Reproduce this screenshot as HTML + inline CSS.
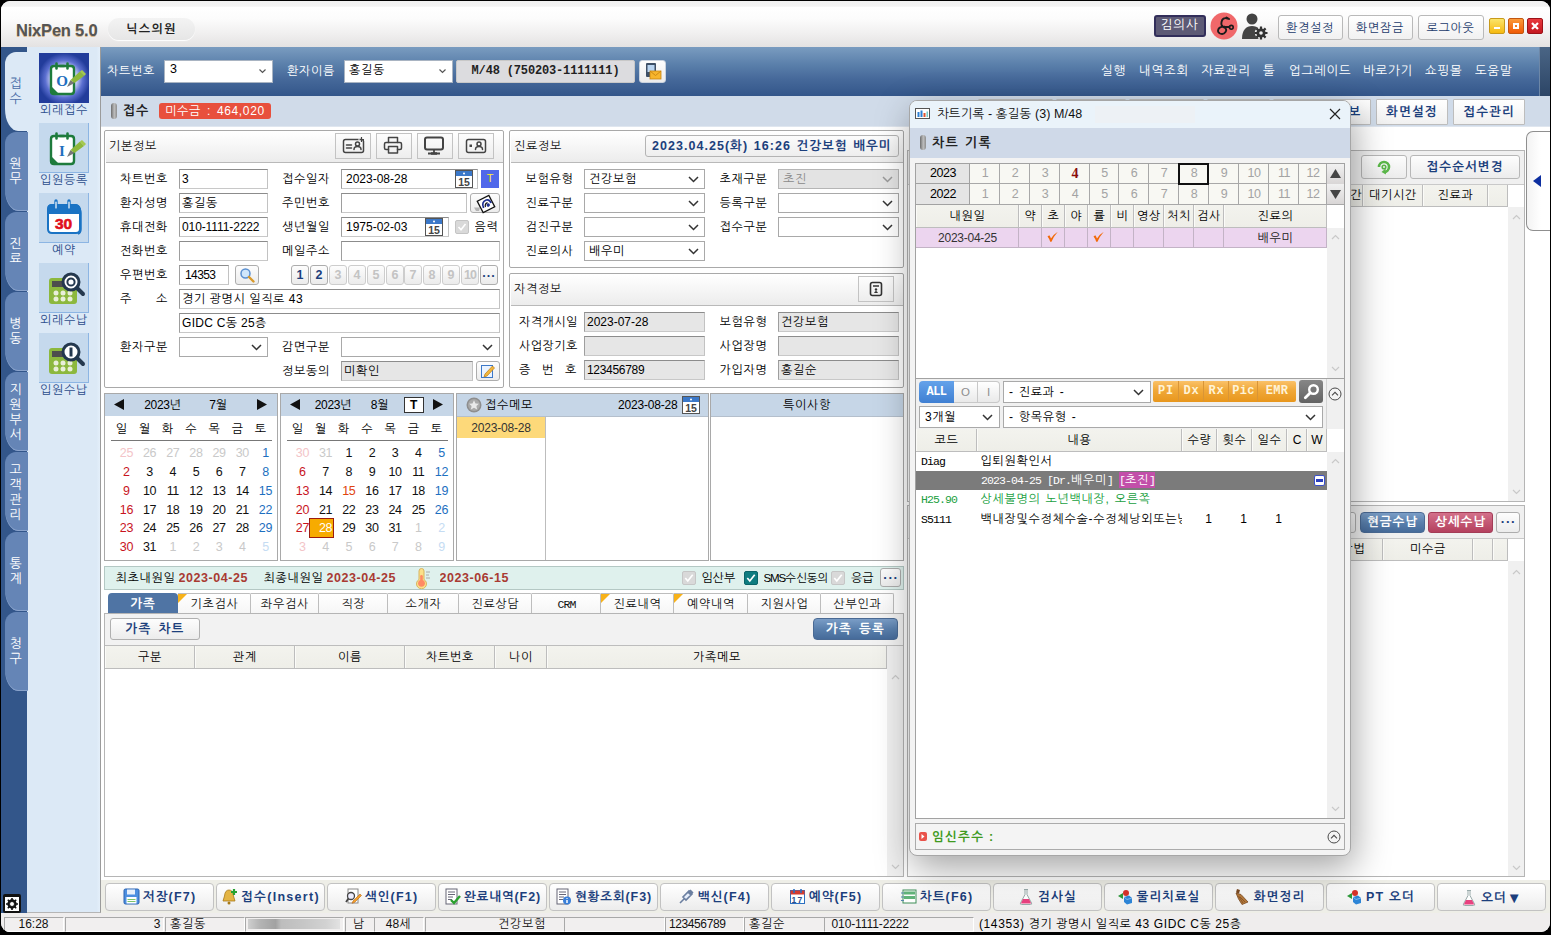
<!DOCTYPE html>
<html lang="ko"><head><meta charset="utf-8"><title>NixPen 5.0</title>
<style>
*{box-sizing:border-box}
html,body{margin:0;padding:0}
body{width:1551px;height:935px;background:#000;overflow:hidden;position:relative;font-family:"Liberation Sans","NanumGothic",sans-serif;font-size:12px;color:#000}
div,svg{position:absolute}
.t{white-space:nowrap;overflow:hidden}
.k{letter-spacing:.72px}
.kb{letter-spacing:1.25px}
.c{text-align:center}
.r{text-align:right}
.b{font-weight:bold}
.w{color:#fff}
.nv{color:#1c3f7c}
.in{background:#fff;border:1px solid #8c8c8c;border-left-color:#9e9e9e;border-right-color:#c2c2c2;border-bottom-color:#c8c8c8;padding-left:2px;white-space:nowrap;overflow:hidden}
.ro{background:#e6e6e6}
.sel{background:#fff;border:1px solid #a9a9a9;padding-left:4px;white-space:nowrap;overflow:hidden}
.btn{background:linear-gradient(#fdfdfd,#ececec);border:1px solid #b4b4b4;border-radius:3px;text-align:center;white-space:nowrap;overflow:hidden}
.pn{background:#fff;border:1px solid #a9a9a9;border-radius:2px}
.ph{background:linear-gradient(#ffffff,#ececec);border-bottom:1px solid #b9b9b9}
.gh{background:linear-gradient(#f3f3ee,#eeeee8);border-right:1px solid #bdbdbd;border-bottom:1px solid #bdbdbd;box-shadow:inset 1px 0 0 #fbfbf8}
.sb{background:#f0f0f0}
</style></head>
<body>
<div style="left:1px;top:1px;width:1549px;height:931px;background:#f0f0f0;border-radius:9px 9px 9px 9px;overflow:hidden">
<div style="left:-1px;top:-1px;width:1551px;height:935px">
<div style="left:0px;top:0px;width:1551px;height:47px;background:linear-gradient(#f1f1f1 0%,#f3f3f3 13%,#ffffff 16%,#fcfcfc 40%,#f0efef 72%,#e4e2e2 100%);"></div>
<div class="t b" style="left:16px;top:18.5px;width:90px;height:22px;line-height:22px;font-size:16.5px;color:#555;text-shadow:0 1px 0 #d9b68a;font-family:'Liberation Sans',sans-serif;letter-spacing:-.2px">NixPen 5.0</div>
<div style="left:108px;top:18px;width:87px;height:22px;background:linear-gradient(#f3f3f3,#e6e6e6);border-radius:11px;box-shadow:0 1px 1px #fff"></div>
<div class="t c b" style="left:108px;top:18px;width:87px;height:22px;line-height:22px;letter-spacing:1.5px;color:#222;font-size:12px">닉스의원</div>
<div style="left:1154px;top:15px;width:52px;height:22px;background:#5d5a75;border:2px solid #322e5a;border-radius:3px"></div>
<div class="t c w k" style="left:1154px;top:15px;width:51px;height:21px;line-height:21px;font-size:12.5px">김의사</div>
<svg style="left:1210px;top:12px" width="28" height="28" viewBox="0 0 28 28"><circle cx="14" cy="14" r="13.5" fill="#f0686a"/><path d="M17.500 6.500q-5-1.500-6 3.500-.8 4 2.500 5.500 3.500 1.500 1.500 4.500-2 3-5.500 1.500-3-1.500-1.500-4.500 1.500-2.800 6.500-2.300l4.500.3" fill="none" stroke="#1b1b1b" stroke-width="1.900" stroke-linecap="round"/><circle cx="21.300" cy="15.300" r="1.900" fill="none" stroke="#1b1b1b" stroke-width="1.600"/><path d="M16.500 5.500l2.500 1.500" stroke="#1b1b1b" stroke-width="2" stroke-linecap="round"/></svg>
<svg style="left:1241px;top:12px" width="28" height="28" viewBox="0 0 28 28"><circle cx="11" cy="7" r="5.5" fill="#444"/><path d="M1 27c0-9 4-13 10-13s10 4 10 13z" fill="#444"/><circle cx="20" cy="21" r="6.2" fill="#efefef"/><circle cx="20" cy="21" r="4.6" fill="#333"/><circle cx="20" cy="21" r="1.8" fill="#efefef"/><path d="M20 14.5v13M13.5 21h13M15.4 16.4l9.2 9.2M24.6 16.4l-9.2 9.2" stroke="#333" stroke-width="2.2"/><circle cx="20" cy="21" r="1.8" fill="#efefef"/></svg>
<div class="btn" style="left:1278px;top:15px;width:65px;height:25px;border-color:#b9b9b9;border-radius:3px;background:linear-gradient(#ffffff,#f1f1f1)"></div>
<div class="t c k" style="left:1278px;top:15.5px;width:64px;height:24px;line-height:24px;color:#223a6b;font-size:12px">환경설정</div>
<div class="btn" style="left:1348px;top:15px;width:65px;height:25px;border-color:#b9b9b9;border-radius:3px;background:linear-gradient(#ffffff,#f1f1f1)"></div>
<div class="t c k" style="left:1348px;top:15.5px;width:64px;height:24px;line-height:24px;color:#223a6b;font-size:12px">화면잠금</div>
<div class="btn" style="left:1418px;top:15px;width:66px;height:25px;border-color:#b9b9b9;border-radius:3px;background:linear-gradient(#ffffff,#f1f1f1)"></div>
<div class="t c k" style="left:1418px;top:15.5px;width:65px;height:24px;line-height:24px;color:#223a6b;font-size:12px">로그아웃</div>
<div style="left:1489px;top:18px;width:16px;height:16px;background:linear-gradient(#fbe56a,#f6b90f);border:1px solid #c89a1a;border-radius:2px"></div>
<div style="left:1494px;top:27px;width:6px;height:2px;background:#fff"></div>
<div style="left:1508px;top:18px;width:16px;height:16px;background:linear-gradient(#fb9a3a,#f05a05);border:1px solid #c2560f;border-radius:2px"></div>
<div style="left:1513px;top:23px;width:6px;height:6px;border:2px solid #fff"></div>
<div style="left:1527px;top:18px;width:16px;height:16px;background:linear-gradient(#e8393d,#c41820);border:1px solid #9c1218;border-radius:2px"></div>
<svg style="left:1531px;top:22px" width="8" height="8" viewBox="0 0 8 8"><path d="M1 1l6 6M7 1L1 7" stroke="#fff" stroke-width="2.200"/></svg>
<div style="left:0px;top:47px;width:28px;height:866px;background:#33568a"></div>
<div style="left:27px;top:47px;width:74px;height:866px;background:linear-gradient(90deg,#dce9f6 95%,#e4effa);border-right:1px solid #9b9b9b;border-bottom:1px solid #b5b5b5"></div>
<div style="left:5px;top:52px;width:24px;height:79px;background:#dce9f6;border-radius:11px 0 0 13px/12px 0 0 22px;"></div>
<div class="t c" style="left:4.5px;top:77.2px;width:23px;height:14.8px;line-height:14.8px;color:#4a6da8;font-size:13px"><span class="k">접</span></div>
<div class="t c" style="left:4.5px;top:92px;width:23px;height:14.8px;line-height:14.8px;color:#4a6da8;font-size:13px"><span class="k">수</span></div>
<div style="left:5px;top:132px;width:23px;height:79px;background:#6585b6;border-radius:11px 0 0 13px/12px 0 0 22px;box-shadow:inset 0 -1px 0 #8aa3cb"></div>
<div class="t c" style="left:4.5px;top:157.2px;width:23px;height:14.8px;line-height:14.8px;color:#ffffff;font-size:13px"><span class="k">원</span></div>
<div class="t c" style="left:4.5px;top:172px;width:23px;height:14.8px;line-height:14.8px;color:#ffffff;font-size:13px"><span class="k">무</span></div>
<div style="left:5px;top:212px;width:23px;height:79px;background:#6585b6;border-radius:11px 0 0 13px/12px 0 0 22px;box-shadow:inset 0 -1px 0 #8aa3cb"></div>
<div class="t c" style="left:4.5px;top:237.2px;width:23px;height:14.8px;line-height:14.8px;color:#ffffff;font-size:13px"><span class="k">진</span></div>
<div class="t c" style="left:4.5px;top:252px;width:23px;height:14.8px;line-height:14.8px;color:#ffffff;font-size:13px"><span class="k">료</span></div>
<div style="left:5px;top:292px;width:23px;height:79px;background:#6585b6;border-radius:11px 0 0 13px/12px 0 0 22px;box-shadow:inset 0 -1px 0 #8aa3cb"></div>
<div class="t c" style="left:4.5px;top:317.2px;width:23px;height:14.8px;line-height:14.8px;color:#ffffff;font-size:13px"><span class="k">병</span></div>
<div class="t c" style="left:4.5px;top:332px;width:23px;height:14.8px;line-height:14.8px;color:#ffffff;font-size:13px"><span class="k">동</span></div>
<div style="left:5px;top:372px;width:23px;height:79px;background:#6585b6;border-radius:11px 0 0 13px/12px 0 0 22px;box-shadow:inset 0 -1px 0 #8aa3cb"></div>
<div class="t c" style="left:4.5px;top:381.6px;width:23px;height:15.2px;line-height:15.2px;color:#ffffff;font-size:13px"><span class="k">지</span></div>
<div class="t c" style="left:4.5px;top:396.8px;width:23px;height:15.2px;line-height:15.2px;color:#ffffff;font-size:13px"><span class="k">원</span></div>
<div class="t c" style="left:4.5px;top:412px;width:23px;height:15.2px;line-height:15.2px;color:#ffffff;font-size:13px"><span class="k">부</span></div>
<div class="t c" style="left:4.5px;top:427.2px;width:23px;height:15.2px;line-height:15.2px;color:#ffffff;font-size:13px"><span class="k">서</span></div>
<div style="left:5px;top:452px;width:23px;height:79px;background:#6585b6;border-radius:11px 0 0 13px/12px 0 0 22px;box-shadow:inset 0 -1px 0 #8aa3cb"></div>
<div class="t c" style="left:4.5px;top:461.6px;width:23px;height:15.2px;line-height:15.2px;color:#ffffff;font-size:13px"><span class="k">고</span></div>
<div class="t c" style="left:4.5px;top:476.8px;width:23px;height:15.2px;line-height:15.2px;color:#ffffff;font-size:13px"><span class="k">객</span></div>
<div class="t c" style="left:4.5px;top:492px;width:23px;height:15.2px;line-height:15.2px;color:#ffffff;font-size:13px"><span class="k">관</span></div>
<div class="t c" style="left:4.5px;top:507.2px;width:23px;height:15.2px;line-height:15.2px;color:#ffffff;font-size:13px"><span class="k">리</span></div>
<div style="left:5px;top:532px;width:23px;height:79px;background:#6585b6;border-radius:11px 0 0 13px/12px 0 0 22px;box-shadow:inset 0 -1px 0 #8aa3cb"></div>
<div class="t c" style="left:4.5px;top:557.2px;width:23px;height:14.8px;line-height:14.8px;color:#ffffff;font-size:13px"><span class="k">통</span></div>
<div class="t c" style="left:4.5px;top:572px;width:23px;height:14.8px;line-height:14.8px;color:#ffffff;font-size:13px"><span class="k">계</span></div>
<div style="left:5px;top:612px;width:23px;height:79px;background:#6585b6;border-radius:11px 0 0 13px/12px 0 0 22px;box-shadow:inset 0 -1px 0 #8aa3cb"></div>
<div class="t c" style="left:4.5px;top:637.2px;width:23px;height:14.8px;line-height:14.8px;color:#ffffff;font-size:13px"><span class="k">청</span></div>
<div class="t c" style="left:4.5px;top:652px;width:23px;height:14.8px;line-height:14.8px;color:#ffffff;font-size:13px"><span class="k">구</span></div>
<div style="left:3px;top:894px;width:18px;height:19px;background:#111;border-radius:2px"></div>
<svg style="left:5px;top:897px" width="14" height="14" viewBox="0 0 14 14"><rect x="0" y="0" width="14" height="14" fill="#fff"/><circle cx="7" cy="7" r="3.6" fill="none" stroke="#111" stroke-width="2.2"/><path d="M7 1v12M1 7h12M2.8 2.8l8.4 8.4M11.2 2.8l-8.4 8.4" stroke="#111" stroke-width="1.6"/><circle cx="7" cy="7" r="2" fill="#fff"/></svg>
<div style="left:39px;top:53px;width:50px;height:50px;background:radial-gradient(circle at 50% 52%,#ffffff 0%,#e8ecff 30%,#5b6fd0 52%,#223c9b 72%);overflow:hidden"><svg style="left:0;top:0" width="50" height="50" viewBox="0 -3 50 50"><path d="M12 13q0-3 3-3h17q3 0 3 3v22q0 3-3 3H15q-3 0-3-3z" fill="#fff" stroke="#1e7b3c" stroke-width="2.4"/><path d="M11 29l9 9h-6q-3 0-3-3z" fill="#1e7b3c"/><path d="M13.5 30.5h5.5v5.5z" fill="#fff" opacity=".9"/><path d="M17.5 7.5v5M28.500 7.500v5" stroke="#1e7b3c" stroke-width="2.6" stroke-linecap="round"/><path d="M20.500 10h5" stroke="#1e7b3c" stroke-width="2.400"/><text x="23" y="30" font-family="Liberation Serif,serif" font-weight="bold" font-size="15" fill="#1f6fc0" text-anchor="middle">O</text><path d="M28 31l3.5-7 4 3z" fill="#777"/><path d="M31.5 24l9.500-8.500 4 4.500-9.500 7z" fill="#8fb83a"/><path d="M41 15.500l2-1.500 4 4-2 2z" fill="#a5c94e"/></svg></div>
<div class="t c k" style="left:30px;top:103px;width:68px;height:14px;line-height:14px;color:#2b4d8c;font-size:12px">외래접수</div>
<div style="left:39px;top:123px;width:50px;height:50px;background:#c5d9ed;border-right:1px solid #8cb5e3;border-bottom:1px solid #8cb5e3;overflow:hidden"><svg style="left:0;top:0" width="50" height="50" viewBox="0 -3 50 50"><path d="M12 13q0-3 3-3h17q3 0 3 3v22q0 3-3 3H15q-3 0-3-3z" fill="#fff" stroke="#1e7b3c" stroke-width="2.4"/><path d="M11 29l9 9h-6q-3 0-3-3z" fill="#1e7b3c"/><path d="M13.5 30.5h5.5v5.5z" fill="#fff" opacity=".9"/><path d="M17.5 7.5v5M28.500 7.500v5" stroke="#1e7b3c" stroke-width="2.6" stroke-linecap="round"/><path d="M20.500 10h5" stroke="#1e7b3c" stroke-width="2.400"/><text x="23" y="30" font-family="Liberation Serif,serif" font-weight="bold" font-size="15" fill="#1f6fc0" text-anchor="middle">I</text><path d="M28 31l3.5-7 4 3z" fill="#777"/><path d="M31.5 24l9.500-8.500 4 4.500-9.500 7z" fill="#8fb83a"/><path d="M41 15.500l2-1.500 4 4-2 2z" fill="#a5c94e"/></svg></div>
<div class="t c k" style="left:30px;top:173px;width:68px;height:14px;line-height:14px;color:#2b4d8c;font-size:12px">입원등록</div>
<div style="left:39px;top:193px;width:50px;height:50px;background:#c5d9ed;border-right:1px solid #8cb5e3;border-bottom:1px solid #8cb5e3;overflow:hidden"><svg style="left:0;top:0" width="50" height="50" viewBox="0 0 50 50"><path d="M9 16q0-4 4-4h23q4 0 5 4v20q0 4-4 4H13q-4 0-4-4z" fill="#fff" stroke="#1a73c4" stroke-width="2"/><path d="M8.500 21v-5q0-5 5-5h22q5 0 6 5v5z" fill="#1a73c4"/><path d="M39 14q3 2 3 6v16q0 4-3 5" fill="none" stroke="#1a73c4" stroke-width="1.500"/><path d="M17 8v8M30 8v8" stroke="#1a73c4" stroke-width="3.400" stroke-linecap="round"/><path d="M17 9v6M30 9v6" stroke="#fff" stroke-width="1.200" stroke-linecap="round"/><text x="24.500" y="35.500" font-family="Liberation Sans,sans-serif" font-weight="bold" font-size="15.500" fill="#e0101c" stroke="#e0101c" stroke-width=".6" text-anchor="middle">30</text></svg></div>
<div class="t c k" style="left:30px;top:243px;width:68px;height:14px;line-height:14px;color:#2b4d8c;font-size:12px">예약</div>
<div style="left:39px;top:263px;width:50px;height:50px;background:#c5d9ed;border-right:1px solid #8cb5e3;border-bottom:1px solid #8cb5e3;overflow:hidden"><svg style="left:0;top:0" width="50" height="50" viewBox="0 0 50 50"><rect x="10" y="15" width="28" height="26" rx="3" fill="#8cb83e"/><rect x="13" y="18" width="14" height="6" fill="#4d4d4d"/><circle cx="17" cy="30" r="2.5" fill="#e9efd9"/><circle cx="17" cy="36" r="2.5" fill="#e9efd9"/><circle cx="24" cy="30" r="2.5" fill="#e9efd9"/><circle cx="24" cy="36" r="2.5" fill="#e9efd9"/><circle cx="31" cy="30" r="2.5" fill="#e9efd9"/><circle cx="31" cy="36" r="2.5" fill="#e9efd9"/><circle cx="32" cy="19" r="8" fill="#fff" stroke="#24384e" stroke-width="3"/><path d="M38 25l6 6" stroke="#24384e" stroke-width="4" stroke-linecap="round"/><circle cx="32" cy="19" r="3.600" fill="none" stroke="#24384e" stroke-width="2"/></svg></div>
<div class="t c k" style="left:30px;top:313px;width:68px;height:14px;line-height:14px;color:#2b4d8c;font-size:12px">외래수납</div>
<div style="left:39px;top:333px;width:50px;height:50px;background:#c5d9ed;border-right:1px solid #8cb5e3;border-bottom:1px solid #8cb5e3;overflow:hidden"><svg style="left:0;top:0" width="50" height="50" viewBox="0 0 50 50"><rect x="10" y="15" width="28" height="26" rx="3" fill="#8cb83e"/><rect x="13" y="18" width="14" height="6" fill="#4d4d4d"/><circle cx="17" cy="30" r="2.5" fill="#e9efd9"/><circle cx="17" cy="36" r="2.5" fill="#e9efd9"/><circle cx="24" cy="30" r="2.5" fill="#e9efd9"/><circle cx="24" cy="36" r="2.5" fill="#e9efd9"/><circle cx="31" cy="30" r="2.5" fill="#e9efd9"/><circle cx="31" cy="36" r="2.5" fill="#e9efd9"/><circle cx="32" cy="19" r="8" fill="#fff" stroke="#24384e" stroke-width="3"/><path d="M38 25l6 6" stroke="#24384e" stroke-width="4" stroke-linecap="round"/><path d="M32 14.500v9" stroke="#24384e" stroke-width="3"/></svg></div>
<div class="t c k" style="left:30px;top:383px;width:68px;height:14px;line-height:14px;color:#2b4d8c;font-size:12px">입원수납</div>
<div style="left:101px;top:47px;width:1438px;height:49px;background:linear-gradient(#7a9cc0 0%,#5b80ab 35%,#46699a 65%,#33568a 100%)"></div>
<div style="left:1539px;top:47px;width:12px;height:49px;background:linear-gradient(#4a6585,#2c4566);border-left:1px solid #6d87a7"></div>
<div class="t w k" style="left:107px;top:62px;width:50px;height:18px;line-height:18px;font-size:12px">차트번호</div>
<div class="sel" style="left:164px;top:60px;width:109px;height:23px;border-color:#a9b4c2;padding-left:5px;line-height:17px;font-size:12.5px">3</div>
<svg style="left:258px;top:68px" width="9" height="6" viewBox="0 0 9 6"><path d="M1.500 1.500l3 3 3-3" fill="none" stroke="#555" stroke-width="1.200"/></svg>
<div class="t w k" style="left:287px;top:62px;width:50px;height:18px;line-height:18px;font-size:12px">환자이름</div>
<div class="sel" style="left:344px;top:60px;width:109px;height:23px;border-color:#a9b4c2;padding-left:4px;line-height:18px;font-size:12px;letter-spacing:.7px">홍길동</div>
<svg style="left:438px;top:68px" width="9" height="6" viewBox="0 0 9 6"><path d="M1.500 1.500l3 3 3-3" fill="none" stroke="#555" stroke-width="1.200"/></svg>
<div style="left:456px;top:60px;width:179px;height:23px;background:#dcdcdf;border:1px solid #c8c8c8;border-radius:2px"></div>
<div class="t c b" style="left:456px;top:60px;width:179px;height:23px;line-height:23px;font-family:'Liberation Mono',monospace;font-size:12px;color:#222;letter-spacing:-.16px">M/48 (750203-1111111)</div>
<div class="btn" style="left:639px;top:60px;width:27px;height:23px;border-color:#c9d2de;border-radius:3px"></div>
<svg style="left:643px;top:62px" width="19" height="19" viewBox="0 0 19 19"><rect x="3" y="1" width="10" height="14" rx="1" fill="#3d4f66"/><rect x="4.500" y="3" width="7" height="7" fill="#b9d4f0"/><rect x="7" y="9" width="11" height="8" fill="#f7b52c" stroke="#c98512" stroke-width=".8"/><path d="M7 9l5.500 4.500L18 9" fill="none" stroke="#c98512" stroke-width=".9"/></svg>
<div class="t w k" style="left:1101px;top:62px;width:30px;height:18px;line-height:18px;font-size:12.5px">실행</div>
<div class="t w k" style="left:1139px;top:62px;width:54px;height:18px;line-height:18px;font-size:12.5px">내역조회</div>
<div class="t w k" style="left:1201px;top:62px;width:54px;height:18px;line-height:18px;font-size:12.5px">자료관리</div>
<div class="t w k" style="left:1263px;top:62px;width:18px;height:18px;line-height:18px;font-size:12.5px">툴</div>
<div class="t w k" style="left:1289px;top:62px;width:66px;height:18px;line-height:18px;font-size:12.5px">업그레이드</div>
<div class="t w k" style="left:1363px;top:62px;width:54px;height:18px;line-height:18px;font-size:12.5px">바로가기</div>
<div class="t w k" style="left:1425px;top:62px;width:42px;height:18px;line-height:18px;font-size:12.5px">쇼핑몰</div>
<div class="t w k" style="left:1475px;top:62px;width:42px;height:18px;line-height:18px;font-size:12.5px">도움말</div>
<div style="left:101px;top:96px;width:1450px;height:31px;background:#d0dbe9;border-bottom:1px solid #dfe6ef"></div>
<div style="left:101px;top:127px;width:1450px;height:753px;background:#fff"></div>
<div style="left:111px;top:103px;width:6px;height:16px;background:linear-gradient(90deg,#6d6d6d,#bdbdbd 55%,#8e8e8e);border-radius:3px"></div>
<div class="t b k" style="left:123px;top:102px;width:30px;height:18px;line-height:18px;font-size:13px;color:#222">접수</div>
<div style="left:159px;top:103px;width:112px;height:16px;background:#e8503d;border-radius:3px"></div>
<div class="t c w" style="left:159px;top:103px;width:112px;height:16px;line-height:16px;font-size:12px;letter-spacing:.65px;word-spacing:2px">미수금 : 464,020</div>
<div class="pn" style="left:104px;top:130px;width:400px;height:258px;"></div>
<div class="ph" style="left:106px;top:132px;width:397px;height:31px;"></div>
<div class="t k" style="left:109px;top:137px;width:60px;height:18px;line-height:18px;color:#111">기본정보</div>
<div style="left:335px;top:133px;width:36px;height:26px;background:linear-gradient(#fdfdfd,#ededed);border:1px solid #c3c3c3"></div>
<svg style="left:335px;top:133px" width="36" height="26" viewBox="0 0 36 26"><rect x="8.500" y="6.500" width="20" height="13" rx="2" fill="none" stroke="#444" stroke-width="1.5" stroke-linejoin="round" stroke-linecap="round"/><path d="M11.500 12h5M11.500 15h5" fill="none" stroke="#444" stroke-width="1.5" stroke-linejoin="round" stroke-linecap="round"/><circle cx="22.500" cy="11" r="2" fill="none" stroke="#444" stroke-width="1.5" stroke-linejoin="round" stroke-linecap="round"/><path d="M19 16.500q0-3 3.500-3t3.500 3" fill="none" stroke="#444" stroke-width="1.5" stroke-linejoin="round" stroke-linecap="round"/><path d="M26.500 4v5M24 6.500h5" stroke="#444" stroke-width="1.200"/><path d="M23.500 6.500h1M29 6.500h1" stroke="#f7f7f7" stroke-width="2.500"/></svg>
<div style="left:376px;top:133px;width:36px;height:26px;background:linear-gradient(#fdfdfd,#ededed);border:1px solid #c3c3c3"></div>
<svg style="left:376px;top:133px" width="36" height="26" viewBox="0 0 36 26"><path d="M12.500 9.500v-5h9v5" fill="none" stroke="#444" stroke-width="1.5" stroke-linejoin="round" stroke-linecap="round"/><path d="M12.500 16.500h-2.500q-1.500 0-1.500-1.500v-4q0-1.500 1.500-1.500h14q1.500 0 1.500 1.500v4q0 1.500-1.500 1.500h-2.500" fill="none" stroke="#444" stroke-width="1.5" stroke-linejoin="round" stroke-linecap="round"/><rect x="12.500" y="13.500" width="9" height="6.500" fill="none" stroke="#444" stroke-width="1.5" stroke-linejoin="round" stroke-linecap="round"/></svg>
<div style="left:417px;top:133px;width:36px;height:26px;background:linear-gradient(#fdfdfd,#ededed);border:1px solid #c3c3c3"></div>
<svg style="left:417px;top:133px" width="36" height="26" viewBox="0 0 36 26"><rect x="8" y="4.500" width="18" height="12" rx="2" fill="none" stroke="#444" stroke-width="2"/><path d="M17 17v3M11 20.500h12" stroke="#444" stroke-width="1.800"/><path d="M14 20.500h6" stroke="#444" stroke-width="2.400"/></svg>
<div style="left:458px;top:133px;width:36px;height:26px;background:linear-gradient(#fdfdfd,#ededed);border:1px solid #c3c3c3"></div>
<svg style="left:458px;top:133px" width="36" height="26" viewBox="0 0 36 26"><rect x="8.500" y="6.500" width="19" height="13" rx="2" fill="none" stroke="#444" stroke-width="1.5" stroke-linejoin="round" stroke-linecap="round"/><rect x="11.500" y="11.500" width="2.500" height="2.500" fill="#444"/><circle cx="21" cy="11" r="2" fill="none" stroke="#444" stroke-width="1.5" stroke-linejoin="round" stroke-linecap="round"/><path d="M17.500 16.500q0-3 3.500-3t3.500 3" fill="none" stroke="#444" stroke-width="1.5" stroke-linejoin="round" stroke-linecap="round"/></svg>
<div class="t k" style="left:120px;top:169.5px;width:50px;height:19px;line-height:19px;">차트번호</div>
<div class="t k" style="left:120px;top:193.5px;width:50px;height:19px;line-height:19px;">환자성명</div>
<div class="t k" style="left:120px;top:217.5px;width:50px;height:19px;line-height:19px;">휴대전화</div>
<div class="t k" style="left:120px;top:241.5px;width:50px;height:19px;line-height:19px;">전화번호</div>
<div class="t k" style="left:120px;top:265.5px;width:50px;height:19px;line-height:19px;">우편번호</div>
<div class="t k" style="left:120px;top:289.5px;width:50px;height:19px;line-height:19px;">주<span style="position:static;display:inline-block;width:24px"></span>소</div>
<div class="t k" style="left:120px;top:337.5px;width:50px;height:19px;line-height:19px;">환자구분</div>
<div class="in" style="left:179px;top:169px;width:89px;height:20px;line-height:18px;">3</div>
<div class="in" style="left:179px;top:193px;width:89px;height:20px;line-height:18px;"><span class="k">홍길동</span></div>
<div class="in" style="left:179px;top:217px;width:89px;height:20px;line-height:18px;letter-spacing:-.1px;padding-left:2px">010-1111-2222</div>
<div class="in" style="left:179px;top:241px;width:89px;height:20px;line-height:18px;"></div>
<div class="in" style="left:179px;top:265px;width:50px;height:20px;line-height:18px;padding-left:5px;letter-spacing:-.6px">14353</div>
<div class="btn" style="left:235px;top:265px;width:24px;height:20px;border-radius:3px;border-color:#adadad"></div>
<svg style="left:239px;top:267.0px" width="16" height="16" viewBox="0 0 16 16"><circle cx="6.500" cy="6.500" r="4.500" fill="#cfe6fb" stroke="#5a8fd0" stroke-width="1.500"/><path d="M10 10l4.500 4.500" stroke="#d99a2b" stroke-width="2.400" stroke-linecap="round"/></svg>
<div class="t k" style="left:282px;top:169.5px;width:50px;height:19px;line-height:19px;">접수일자</div>
<div class="t k" style="left:282px;top:193.5px;width:50px;height:19px;line-height:19px;">주민번호</div>
<div class="t k" style="left:282px;top:217.5px;width:50px;height:19px;line-height:19px;">생년월일</div>
<div class="t k" style="left:282px;top:241.5px;width:50px;height:19px;line-height:19px;">메일주소</div>
<div class="t k" style="left:282px;top:337.5px;width:50px;height:19px;line-height:19px;">감면구분</div>
<div class="t k" style="left:282px;top:361.5px;width:50px;height:19px;line-height:19px;">정보동의</div>
<div class="in" style="left:341px;top:169px;width:137px;height:20px;line-height:18px;padding-left:4px">2023-08-28</div>
<svg style="left:454.5px;top:170.0px" width="18" height="18" viewBox="0 0 18 18"><rect x=".5" y=".5" width="17" height="17" fill="#fff" stroke="#555"/><rect x="1" y="1" width="16" height="5" fill="#3b78c9"/><circle cx="9" cy="3.500" r="1" fill="#fff"/><text x="9" y="15.500" font-family="Liberation Sans,sans-serif" font-size="10.500" font-weight="bold" fill="#444" text-anchor="middle">15</text></svg>
<div style="left:481px;top:170px;width:18px;height:18px;background:#5068ea"></div>
<div class="t c" style="left:481px;top:170px;width:18px;height:17px;line-height:17px;color:#fff12e;font-size:11px">T</div>
<div class="in" style="left:341px;top:193px;width:126px;height:20px;line-height:18px;"></div>
<div class="btn" style="left:470px;top:193px;width:30px;height:20px;border-radius:3px;border-color:#adadad"></div>
<svg style="left:471px;top:193.5px" width="28" height="20" viewBox="0 0 28 20"><path d="M3 13.500h6l-1 3.500H5z" fill="#b5b5b5"/><g transform="rotate(-27 15 10)"><rect x="8.500" y="3.500" width="13" height="13" fill="#fff" stroke="#111" stroke-width="1.300"/><path d="M11 12.500q.5-6.500 6-6 3.500.8 3 5" fill="none" stroke="#1d2f8f" stroke-width="1.700"/><path d="M13 12.500q1-3.500 4-3" fill="none" stroke="#111" stroke-width="1.200"/><circle cx="16.500" cy="12" r="1.700" fill="#1d2f8f"/></g></svg>
<div class="in" style="left:341px;top:217px;width:108px;height:20px;line-height:18px;padding-left:4px">1975-02-03</div>
<svg style="left:425px;top:218.0px" width="18" height="18" viewBox="0 0 18 18"><rect x=".5" y=".5" width="17" height="17" fill="#fff" stroke="#555"/><rect x="1" y="1" width="16" height="5" fill="#3b78c9"/><circle cx="9" cy="3.500" r="1" fill="#fff"/><text x="9" y="15.500" font-family="Liberation Sans,sans-serif" font-size="10.500" font-weight="bold" fill="#444" text-anchor="middle">15</text></svg>
<div style="left:455px;top:220px;width:14px;height:14px;background:#d9d9d9;border:1px solid #c4c4c4;border-radius:2px"></div>
<svg style="left:457px;top:222.0px" width="10" height="10" viewBox="0 0 10 10"><path d="M1.500 5l2.500 2.800L8.500 2" fill="none" stroke="#fff" stroke-width="1.600"/></svg>
<div class="t k" style="left:474.5px;top:217.5px;width:26px;height:19px;line-height:19px;">음력</div>
<div class="in" style="left:341px;top:241px;width:159px;height:20px;line-height:18px;"></div>
<div class="btn" style="left:291px;top:265px;width:18px;height:20px;border-radius:3px;border-color:#adadad;background:linear-gradient(#fdfdfd,#ebebeb)"></div>
<div class="t c b" style="left:291px;top:265.5px;width:18px;height:19px;line-height:19px;color:#1c3f7c;font-size:12.5px">1</div>
<div class="btn" style="left:310px;top:265px;width:18px;height:20px;border-radius:3px;border-color:#adadad;background:linear-gradient(#fdfdfd,#ebebeb)"></div>
<div class="t c b" style="left:310px;top:265.5px;width:18px;height:19px;line-height:19px;color:#1c3f7c;font-size:12.5px">2</div>
<div class="btn" style="left:329px;top:265px;width:18px;height:20px;border-radius:3px;border-color:#cdcdcd;background:linear-gradient(#fdfdfd,#ebebeb)"></div>
<div class="t c b" style="left:329px;top:265.5px;width:18px;height:19px;line-height:19px;color:#c3c3c3;font-size:12.5px">3</div>
<div class="btn" style="left:348px;top:265px;width:18px;height:20px;border-radius:3px;border-color:#cdcdcd;background:linear-gradient(#fdfdfd,#ebebeb)"></div>
<div class="t c b" style="left:348px;top:265.5px;width:18px;height:19px;line-height:19px;color:#c3c3c3;font-size:12.5px">4</div>
<div class="btn" style="left:367px;top:265px;width:18px;height:20px;border-radius:3px;border-color:#cdcdcd;background:linear-gradient(#fdfdfd,#ebebeb)"></div>
<div class="t c b" style="left:367px;top:265.5px;width:18px;height:19px;line-height:19px;color:#c3c3c3;font-size:12.5px">5</div>
<div class="btn" style="left:386px;top:265px;width:18px;height:20px;border-radius:3px;border-color:#cdcdcd;background:linear-gradient(#fdfdfd,#ebebeb)"></div>
<div class="t c b" style="left:386px;top:265.5px;width:18px;height:19px;line-height:19px;color:#c3c3c3;font-size:12.5px">6</div>
<div class="btn" style="left:404px;top:265px;width:18px;height:20px;border-radius:3px;border-color:#cdcdcd;background:linear-gradient(#fdfdfd,#ebebeb)"></div>
<div class="t c b" style="left:404px;top:265.5px;width:18px;height:19px;line-height:19px;color:#c3c3c3;font-size:12.5px">7</div>
<div class="btn" style="left:423px;top:265px;width:18px;height:20px;border-radius:3px;border-color:#cdcdcd;background:linear-gradient(#fdfdfd,#ebebeb)"></div>
<div class="t c b" style="left:423px;top:265.5px;width:18px;height:19px;line-height:19px;color:#c3c3c3;font-size:12.5px">8</div>
<div class="btn" style="left:442px;top:265px;width:18px;height:20px;border-radius:3px;border-color:#cdcdcd;background:linear-gradient(#fdfdfd,#ebebeb)"></div>
<div class="t c b" style="left:442px;top:265.5px;width:18px;height:19px;line-height:19px;color:#c3c3c3;font-size:12.5px">9</div>
<div class="btn" style="left:461px;top:265px;width:18px;height:20px;border-radius:3px;border-color:#cdcdcd;background:linear-gradient(#fdfdfd,#ebebeb)"></div>
<div class="t c b" style="left:461px;top:265.5px;width:18px;height:19px;line-height:19px;color:#c3c3c3;font-size:12.5px;letter-spacing:-1px">10</div>
<div class="btn" style="left:480px;top:265px;width:18px;height:20px;border-radius:3px;border-color:#adadad;background:linear-gradient(#fdfdfd,#ebebeb)"></div>
<div class="t c b" style="left:480px;top:265.5px;width:18px;height:15px;line-height:15px;color:#1c3f7c;font-size:12.5px;letter-spacing:1px">...</div>
<div class="in" style="left:179px;top:289px;width:321px;height:20px;line-height:18px;letter-spacing:.6px">경기 광명시 일직로 43</div>
<div class="in" style="left:179px;top:313px;width:321px;height:20px;line-height:18px;letter-spacing:.3px">GIDC C동 25층</div>
<div class="sel" style="left:179px;top:337px;width:89px;height:20px;line-height:18px;"></div>
<svg style="left:250.5px;top:344.0px" width="11" height="7" viewBox="0 0 11 7"><path d="M1 1l4.500 4.500L10 1" fill="none" stroke="#333" stroke-width="1.500"/></svg>
<div class="sel" style="left:341px;top:337px;width:159px;height:20px;line-height:18px;"></div>
<svg style="left:482px;top:344.0px" width="11" height="7" viewBox="0 0 11 7"><path d="M1 1l4.500 4.500L10 1" fill="none" stroke="#333" stroke-width="1.500"/></svg>
<div class="in ro" style="left:341px;top:361px;width:132px;height:20px;line-height:18px;letter-spacing:.7px">미확인</div>
<div class="btn" style="left:476px;top:361px;width:24px;height:20px;border-radius:3px;border-color:#adadad"></div>
<svg style="left:479.500px;top:363.0px" width="16" height="16" viewBox="0 0 16 16"><rect x="1.500" y="2.500" width="11" height="12" fill="#eaf3ff" stroke="#3c78c8"/><path d="M5 11l7.500-8 2 2-7.500 8-3 1z" fill="#f2b63a" stroke="#b97a14" stroke-width=".7"/></svg>
<div class="pn" style="left:509px;top:130px;width:395px;height:138px;"></div>
<div class="ph" style="left:511px;top:132px;width:392px;height:31px;"></div>
<div class="t k" style="left:514px;top:137px;width:60px;height:18px;line-height:18px;color:#111">진료정보</div>
<div class="btn" style="left:645px;top:135px;width:254px;height:22px;border-radius:3px;border-color:#b4b4b4;background:linear-gradient(#fcfcfc,#eeeeee)"></div>
<div class="t c b nv" style="left:645px;top:135.5px;width:253.5px;height:21px;line-height:21px;font-size:12.5px;letter-spacing:1.05px;word-spacing:1px">2023.04.25(화) 16:26 건강보험 배우미</div>
<div class="t k" style="left:525.5px;top:169.5px;width:50px;height:19px;line-height:19px;">보험유형</div>
<div class="t k" style="left:525.5px;top:193.5px;width:50px;height:19px;line-height:19px;">진료구분</div>
<div class="t k" style="left:525.5px;top:217.5px;width:50px;height:19px;line-height:19px;">검진구분</div>
<div class="t k" style="left:525.5px;top:241.5px;width:50px;height:19px;line-height:19px;">진료의사</div>
<div class="t k" style="left:719.5px;top:169.5px;width:50px;height:19px;line-height:19px;">초재구분</div>
<div class="t k" style="left:719.5px;top:193.5px;width:50px;height:19px;line-height:19px;">등록구분</div>
<div class="t k" style="left:719.5px;top:217.5px;width:50px;height:19px;line-height:19px;">접수구분</div>
<div class="sel" style="left:584px;top:169px;width:121px;height:20px;line-height:18px;"><span class="k">건강보험</span></div>
<svg style="left:687.5px;top:176.0px" width="11" height="7" viewBox="0 0 11 7"><path d="M1 1l4.500 4.500L10 1" fill="none" stroke="#333" stroke-width="1.500"/></svg>
<div class="sel" style="left:584px;top:193px;width:121px;height:20px;line-height:18px;"></div>
<svg style="left:687.5px;top:200.0px" width="11" height="7" viewBox="0 0 11 7"><path d="M1 1l4.500 4.500L10 1" fill="none" stroke="#333" stroke-width="1.500"/></svg>
<div class="sel" style="left:584px;top:217px;width:121px;height:20px;line-height:18px;"></div>
<svg style="left:687.5px;top:224.0px" width="11" height="7" viewBox="0 0 11 7"><path d="M1 1l4.500 4.500L10 1" fill="none" stroke="#333" stroke-width="1.500"/></svg>
<div class="sel" style="left:584px;top:241px;width:121px;height:20px;line-height:18px;"><span class="k">배우미</span></div>
<svg style="left:687.5px;top:248.0px" width="11" height="7" viewBox="0 0 11 7"><path d="M1 1l4.500 4.500L10 1" fill="none" stroke="#333" stroke-width="1.500"/></svg>
<div class="sel" style="left:778px;top:169px;width:121px;height:20px;line-height:18px;background:#e3e3e3;color:#8a8a8a;border-color:#b5b5b5;"><span class="k">초진</span></div>
<svg style="left:881.5px;top:176.0px" width="11" height="7" viewBox="0 0 11 7"><path d="M1 1l4.500 4.500L10 1" fill="none" stroke="#999" stroke-width="1.500"/></svg>
<div class="sel" style="left:778px;top:193px;width:121px;height:20px;line-height:18px;"></div>
<svg style="left:881.5px;top:200.0px" width="11" height="7" viewBox="0 0 11 7"><path d="M1 1l4.500 4.500L10 1" fill="none" stroke="#333" stroke-width="1.500"/></svg>
<div class="sel" style="left:778px;top:217px;width:121px;height:20px;line-height:18px;"></div>
<svg style="left:881.5px;top:224.0px" width="11" height="7" viewBox="0 0 11 7"><path d="M1 1l4.500 4.500L10 1" fill="none" stroke="#333" stroke-width="1.500"/></svg>
<div class="pn" style="left:509px;top:273px;width:395px;height:115px;"></div>
<div class="ph" style="left:511px;top:275px;width:392px;height:31px;"></div>
<div class="t k" style="left:514px;top:280px;width:60px;height:18px;line-height:18px;color:#111">자격정보</div>
<div style="left:858px;top:276px;width:36px;height:26px;background:linear-gradient(#fdfdfd,#ededed);border:1px solid #c3c3c3"></div>
<svg style="left:869px;top:281px" width="14" height="16" viewBox="0 0 14 16"><rect x="1.500" y="1.500" width="11" height="13" rx="2" fill="none" stroke="#333" stroke-width="1.600"/><path d="M4 5h6" stroke="#333" stroke-width="1.500"/><path d="M5 12q2-4 4 0z" fill="#333"/><circle cx="7" cy="8.500" r="1.200" fill="#333"/></svg>
<div class="t" style="left:519px;top:312.5px;width:62px;height:19px;line-height:19px;letter-spacing:.5px">자격개시일</div>
<div class="t" style="left:519px;top:336.5px;width:62px;height:19px;line-height:19px;letter-spacing:.5px">사업장기호</div>
<div class="t k" style="left:519px;top:360.5px;width:62px;height:19px;line-height:19px;">증<span style="position:static;display:inline-block;width:11px"></span>번<span style="position:static;display:inline-block;width:11px"></span>호</div>
<div class="t k" style="left:719.5px;top:312.5px;width:50px;height:19px;line-height:19px;">보험유형</div>
<div class="t k" style="left:719.5px;top:336.5px;width:50px;height:19px;line-height:19px;">사업장명</div>
<div class="t k" style="left:719.5px;top:360.5px;width:50px;height:19px;line-height:19px;">가입자명</div>
<div class="in ro" style="left:584px;top:312px;width:121px;height:20px;line-height:18px;padding-left:2px">2023-07-28</div>
<div class="in ro" style="left:584px;top:336px;width:121px;height:20px;line-height:18px;"></div>
<div class="in ro" style="left:584px;top:360px;width:121px;height:20px;line-height:18px;padding-left:2px;letter-spacing:-.3px">123456789</div>
<div class="in ro" style="left:778px;top:312px;width:121px;height:20px;line-height:18px;letter-spacing:.7px;padding-left:2px">건강보험</div>
<div class="in ro" style="left:778px;top:336px;width:121px;height:20px;line-height:18px;"></div>
<div class="in ro" style="left:778px;top:360px;width:121px;height:20px;line-height:18px;letter-spacing:.7px;padding-left:2px">홍길순</div>
<div class="pn" style="left:104px;top:393px;width:174px;height:168px;border-radius:0"></div>
<div style="left:105px;top:394px;width:172px;height:22px;background:#c6d6e7"></div>
<svg style="left:114px;top:399px" width="10" height="11" viewBox="0 0 10 11"><path d="M10 0v11L0 5.500z" fill="#111"/></svg>
<svg style="left:257px;top:399px" width="10" height="11" viewBox="0 0 10 11"><path d="M0 0v11l10-5.500z" fill="#111"/></svg>
<div class="t c" style="left:137.5px;top:396px;width:50px;height:19px;line-height:19px;letter-spacing:-.3px">2023년</div>
<div class="t c" style="left:198.5px;top:396px;width:40px;height:19px;line-height:19px;">7<span class="k">월</span></div>
<div class="t c" style="left:111.8px;top:420px;width:20px;height:18px;line-height:18px;"><span class="k">일</span></div>
<div class="t c" style="left:134.97px;top:420px;width:20px;height:18px;line-height:18px;"><span class="k">월</span></div>
<div class="t c" style="left:158.14px;top:420px;width:20px;height:18px;line-height:18px;"><span class="k">화</span></div>
<div class="t c" style="left:181.31px;top:420px;width:20px;height:18px;line-height:18px;"><span class="k">수</span></div>
<div class="t c" style="left:204.48px;top:420px;width:20px;height:18px;line-height:18px;"><span class="k">목</span></div>
<div class="t c" style="left:227.65px;top:420px;width:20px;height:18px;line-height:18px;"><span class="k">금</span></div>
<div class="t c" style="left:250.82px;top:420px;width:20px;height:18px;line-height:18px;"><span class="k">토</span></div>
<div style="left:111px;top:440px;width:161px;height:1px;background:#777"></div>
<div class="t c" style="left:114.4px;top:444.4px;width:24px;height:18px;line-height:18px;color:#f3c4c8;font-size:12.5px;letter-spacing:-.4px">25</div>
<div class="t c" style="left:137.57px;top:444.4px;width:24px;height:18px;line-height:18px;color:#c9c9c9;font-size:12.5px;letter-spacing:-.4px">26</div>
<div class="t c" style="left:160.74px;top:444.4px;width:24px;height:18px;line-height:18px;color:#c9c9c9;font-size:12.5px;letter-spacing:-.4px">27</div>
<div class="t c" style="left:183.91px;top:444.4px;width:24px;height:18px;line-height:18px;color:#c9c9c9;font-size:12.5px;letter-spacing:-.4px">28</div>
<div class="t c" style="left:207.08px;top:444.4px;width:24px;height:18px;line-height:18px;color:#c9c9c9;font-size:12.5px;letter-spacing:-.4px">29</div>
<div class="t c" style="left:230.25px;top:444.4px;width:24px;height:18px;line-height:18px;color:#c9c9c9;font-size:12.5px;letter-spacing:-.4px">30</div>
<div class="t c" style="left:253.42px;top:444.4px;width:24px;height:18px;line-height:18px;color:#1d6fc0;font-size:12.5px;letter-spacing:-.4px">1</div>
<div class="t c" style="left:114.4px;top:463.15px;width:24px;height:18px;line-height:18px;color:#c8141e;font-size:12.5px;letter-spacing:-.4px">2</div>
<div class="t c" style="left:137.57px;top:463.15px;width:24px;height:18px;line-height:18px;color:#111;font-size:12.5px;letter-spacing:-.4px">3</div>
<div class="t c" style="left:160.74px;top:463.15px;width:24px;height:18px;line-height:18px;color:#111;font-size:12.5px;letter-spacing:-.4px">4</div>
<div class="t c" style="left:183.91px;top:463.15px;width:24px;height:18px;line-height:18px;color:#111;font-size:12.5px;letter-spacing:-.4px">5</div>
<div class="t c" style="left:207.08px;top:463.15px;width:24px;height:18px;line-height:18px;color:#111;font-size:12.5px;letter-spacing:-.4px">6</div>
<div class="t c" style="left:230.25px;top:463.15px;width:24px;height:18px;line-height:18px;color:#111;font-size:12.5px;letter-spacing:-.4px">7</div>
<div class="t c" style="left:253.42px;top:463.15px;width:24px;height:18px;line-height:18px;color:#1d6fc0;font-size:12.5px;letter-spacing:-.4px">8</div>
<div class="t c" style="left:114.4px;top:481.9px;width:24px;height:18px;line-height:18px;color:#c8141e;font-size:12.5px;letter-spacing:-.4px">9</div>
<div class="t c" style="left:137.57px;top:481.9px;width:24px;height:18px;line-height:18px;color:#111;font-size:12.5px;letter-spacing:-.4px">10</div>
<div class="t c" style="left:160.74px;top:481.9px;width:24px;height:18px;line-height:18px;color:#111;font-size:12.5px;letter-spacing:-.4px">11</div>
<div class="t c" style="left:183.91px;top:481.9px;width:24px;height:18px;line-height:18px;color:#111;font-size:12.5px;letter-spacing:-.4px">12</div>
<div class="t c" style="left:207.08px;top:481.9px;width:24px;height:18px;line-height:18px;color:#111;font-size:12.5px;letter-spacing:-.4px">13</div>
<div class="t c" style="left:230.25px;top:481.9px;width:24px;height:18px;line-height:18px;color:#111;font-size:12.5px;letter-spacing:-.4px">14</div>
<div class="t c" style="left:253.42px;top:481.9px;width:24px;height:18px;line-height:18px;color:#1d6fc0;font-size:12.5px;letter-spacing:-.4px">15</div>
<div class="t c" style="left:114.4px;top:500.65px;width:24px;height:18px;line-height:18px;color:#c8141e;font-size:12.5px;letter-spacing:-.4px">16</div>
<div class="t c" style="left:137.57px;top:500.65px;width:24px;height:18px;line-height:18px;color:#111;font-size:12.5px;letter-spacing:-.4px">17</div>
<div class="t c" style="left:160.74px;top:500.65px;width:24px;height:18px;line-height:18px;color:#111;font-size:12.5px;letter-spacing:-.4px">18</div>
<div class="t c" style="left:183.91px;top:500.65px;width:24px;height:18px;line-height:18px;color:#111;font-size:12.5px;letter-spacing:-.4px">19</div>
<div class="t c" style="left:207.08px;top:500.65px;width:24px;height:18px;line-height:18px;color:#111;font-size:12.5px;letter-spacing:-.4px">20</div>
<div class="t c" style="left:230.25px;top:500.65px;width:24px;height:18px;line-height:18px;color:#111;font-size:12.5px;letter-spacing:-.4px">21</div>
<div class="t c" style="left:253.42px;top:500.65px;width:24px;height:18px;line-height:18px;color:#1d6fc0;font-size:12.5px;letter-spacing:-.4px">22</div>
<div class="t c" style="left:114.4px;top:519.4px;width:24px;height:18px;line-height:18px;color:#c8141e;font-size:12.5px;letter-spacing:-.4px">23</div>
<div class="t c" style="left:137.57px;top:519.4px;width:24px;height:18px;line-height:18px;color:#111;font-size:12.5px;letter-spacing:-.4px">24</div>
<div class="t c" style="left:160.74px;top:519.4px;width:24px;height:18px;line-height:18px;color:#111;font-size:12.5px;letter-spacing:-.4px">25</div>
<div class="t c" style="left:183.91px;top:519.4px;width:24px;height:18px;line-height:18px;color:#111;font-size:12.5px;letter-spacing:-.4px">26</div>
<div class="t c" style="left:207.08px;top:519.4px;width:24px;height:18px;line-height:18px;color:#111;font-size:12.5px;letter-spacing:-.4px">27</div>
<div class="t c" style="left:230.25px;top:519.4px;width:24px;height:18px;line-height:18px;color:#111;font-size:12.5px;letter-spacing:-.4px">28</div>
<div class="t c" style="left:253.42px;top:519.4px;width:24px;height:18px;line-height:18px;color:#1d6fc0;font-size:12.5px;letter-spacing:-.4px">29</div>
<div class="t c" style="left:114.4px;top:538.15px;width:24px;height:18px;line-height:18px;color:#c8141e;font-size:12.5px;letter-spacing:-.4px">30</div>
<div class="t c" style="left:137.57px;top:538.15px;width:24px;height:18px;line-height:18px;color:#111;font-size:12.5px;letter-spacing:-.4px">31</div>
<div class="t c" style="left:160.74px;top:538.15px;width:24px;height:18px;line-height:18px;color:#c9c9c9;font-size:12.5px;letter-spacing:-.4px">1</div>
<div class="t c" style="left:183.91px;top:538.15px;width:24px;height:18px;line-height:18px;color:#c9c9c9;font-size:12.5px;letter-spacing:-.4px">2</div>
<div class="t c" style="left:207.08px;top:538.15px;width:24px;height:18px;line-height:18px;color:#c9c9c9;font-size:12.5px;letter-spacing:-.4px">3</div>
<div class="t c" style="left:230.25px;top:538.15px;width:24px;height:18px;line-height:18px;color:#c9c9c9;font-size:12.5px;letter-spacing:-.4px">4</div>
<div class="t c" style="left:253.42px;top:538.15px;width:24px;height:18px;line-height:18px;color:#c5dcf3;font-size:12.5px;letter-spacing:-.4px">5</div>
<div class="pn" style="left:280px;top:393px;width:174px;height:168px;border-radius:0"></div>
<div style="left:281px;top:394px;width:172px;height:22px;background:#c6d6e7"></div>
<svg style="left:290px;top:399px" width="10" height="11" viewBox="0 0 10 11"><path d="M10 0v11L0 5.500z" fill="#111"/></svg>
<svg style="left:433px;top:399px" width="10" height="11" viewBox="0 0 10 11"><path d="M0 0v11l10-5.500z" fill="#111"/></svg>
<div class="t c" style="left:308px;top:396px;width:50px;height:19px;line-height:19px;letter-spacing:-.3px">2023년</div>
<div class="t c" style="left:360px;top:396px;width:40px;height:19px;line-height:19px;">8<span class="k">월</span></div>
<div style="left:404px;top:397px;width:20px;height:16px;background:#fff;border:1px solid #333"></div>
<div class="t c b" style="left:404px;top:397.5px;width:19.5px;height:15px;line-height:15px;font-size:12px">T</div>
<div class="t c" style="left:287.8px;top:420px;width:20px;height:18px;line-height:18px;"><span class="k">일</span></div>
<div class="t c" style="left:310.97px;top:420px;width:20px;height:18px;line-height:18px;"><span class="k">월</span></div>
<div class="t c" style="left:334.14px;top:420px;width:20px;height:18px;line-height:18px;"><span class="k">화</span></div>
<div class="t c" style="left:357.31px;top:420px;width:20px;height:18px;line-height:18px;"><span class="k">수</span></div>
<div class="t c" style="left:380.48px;top:420px;width:20px;height:18px;line-height:18px;"><span class="k">목</span></div>
<div class="t c" style="left:403.65px;top:420px;width:20px;height:18px;line-height:18px;"><span class="k">금</span></div>
<div class="t c" style="left:426.82px;top:420px;width:20px;height:18px;line-height:18px;"><span class="k">토</span></div>
<div style="left:287px;top:440px;width:161px;height:1px;background:#777"></div>
<div class="t c" style="left:290.4px;top:444.4px;width:24px;height:18px;line-height:18px;color:#f3c4c8;font-size:12.5px;letter-spacing:-.4px">30</div>
<div class="t c" style="left:313.57px;top:444.4px;width:24px;height:18px;line-height:18px;color:#c9c9c9;font-size:12.5px;letter-spacing:-.4px">31</div>
<div class="t c" style="left:336.74px;top:444.4px;width:24px;height:18px;line-height:18px;color:#111;font-size:12.5px;letter-spacing:-.4px">1</div>
<div class="t c" style="left:359.91px;top:444.4px;width:24px;height:18px;line-height:18px;color:#111;font-size:12.5px;letter-spacing:-.4px">2</div>
<div class="t c" style="left:383.08px;top:444.4px;width:24px;height:18px;line-height:18px;color:#111;font-size:12.5px;letter-spacing:-.4px">3</div>
<div class="t c" style="left:406.25px;top:444.4px;width:24px;height:18px;line-height:18px;color:#111;font-size:12.5px;letter-spacing:-.4px">4</div>
<div class="t c" style="left:429.42px;top:444.4px;width:24px;height:18px;line-height:18px;color:#1d6fc0;font-size:12.5px;letter-spacing:-.4px">5</div>
<div class="t c" style="left:290.4px;top:463.15px;width:24px;height:18px;line-height:18px;color:#c8141e;font-size:12.5px;letter-spacing:-.4px">6</div>
<div class="t c" style="left:313.57px;top:463.15px;width:24px;height:18px;line-height:18px;color:#111;font-size:12.5px;letter-spacing:-.4px">7</div>
<div class="t c" style="left:336.74px;top:463.15px;width:24px;height:18px;line-height:18px;color:#111;font-size:12.5px;letter-spacing:-.4px">8</div>
<div class="t c" style="left:359.91px;top:463.15px;width:24px;height:18px;line-height:18px;color:#111;font-size:12.5px;letter-spacing:-.4px">9</div>
<div class="t c" style="left:383.08px;top:463.15px;width:24px;height:18px;line-height:18px;color:#111;font-size:12.5px;letter-spacing:-.4px">10</div>
<div class="t c" style="left:406.25px;top:463.15px;width:24px;height:18px;line-height:18px;color:#111;font-size:12.5px;letter-spacing:-.4px">11</div>
<div class="t c" style="left:429.42px;top:463.15px;width:24px;height:18px;line-height:18px;color:#1d6fc0;font-size:12.5px;letter-spacing:-.4px">12</div>
<div class="t c" style="left:290.4px;top:481.9px;width:24px;height:18px;line-height:18px;color:#c8141e;font-size:12.5px;letter-spacing:-.4px">13</div>
<div class="t c" style="left:313.57px;top:481.9px;width:24px;height:18px;line-height:18px;color:#111;font-size:12.5px;letter-spacing:-.4px">14</div>
<div class="t c" style="left:336.74px;top:481.9px;width:24px;height:18px;line-height:18px;color:#e0440e;font-size:12.5px;letter-spacing:-.4px">15</div>
<div class="t c" style="left:359.91px;top:481.9px;width:24px;height:18px;line-height:18px;color:#111;font-size:12.5px;letter-spacing:-.4px">16</div>
<div class="t c" style="left:383.08px;top:481.9px;width:24px;height:18px;line-height:18px;color:#111;font-size:12.5px;letter-spacing:-.4px">17</div>
<div class="t c" style="left:406.25px;top:481.9px;width:24px;height:18px;line-height:18px;color:#111;font-size:12.5px;letter-spacing:-.4px">18</div>
<div class="t c" style="left:429.42px;top:481.9px;width:24px;height:18px;line-height:18px;color:#1d6fc0;font-size:12.5px;letter-spacing:-.4px">19</div>
<div class="t c" style="left:290.4px;top:500.65px;width:24px;height:18px;line-height:18px;color:#c8141e;font-size:12.5px;letter-spacing:-.4px">20</div>
<div class="t c" style="left:313.57px;top:500.65px;width:24px;height:18px;line-height:18px;color:#111;font-size:12.5px;letter-spacing:-.4px">21</div>
<div class="t c" style="left:336.74px;top:500.65px;width:24px;height:18px;line-height:18px;color:#111;font-size:12.5px;letter-spacing:-.4px">22</div>
<div class="t c" style="left:359.91px;top:500.65px;width:24px;height:18px;line-height:18px;color:#111;font-size:12.5px;letter-spacing:-.4px">23</div>
<div class="t c" style="left:383.08px;top:500.65px;width:24px;height:18px;line-height:18px;color:#111;font-size:12.5px;letter-spacing:-.4px">24</div>
<div class="t c" style="left:406.25px;top:500.65px;width:24px;height:18px;line-height:18px;color:#111;font-size:12.5px;letter-spacing:-.4px">25</div>
<div class="t c" style="left:429.42px;top:500.65px;width:24px;height:18px;line-height:18px;color:#1d6fc0;font-size:12.5px;letter-spacing:-.4px">26</div>
<div class="t c" style="left:290.4px;top:519.4px;width:24px;height:18px;line-height:18px;color:#c8141e;font-size:12.5px;letter-spacing:-.4px">27</div>
<div style="left:309px;top:518px;width:25px;height:20px;background:#f7ab00;border:1px solid #9c1c10"></div>
<div class="t c" style="left:313.57px;top:519.4px;width:24px;height:18px;line-height:18px;color:#fff;font-size:12.5px;letter-spacing:-.4px">28</div>
<div class="t c" style="left:336.74px;top:519.4px;width:24px;height:18px;line-height:18px;color:#111;font-size:12.5px;letter-spacing:-.4px">29</div>
<div class="t c" style="left:359.91px;top:519.4px;width:24px;height:18px;line-height:18px;color:#111;font-size:12.5px;letter-spacing:-.4px">30</div>
<div class="t c" style="left:383.08px;top:519.4px;width:24px;height:18px;line-height:18px;color:#111;font-size:12.5px;letter-spacing:-.4px">31</div>
<div class="t c" style="left:406.25px;top:519.4px;width:24px;height:18px;line-height:18px;color:#c9c9c9;font-size:12.5px;letter-spacing:-.4px">1</div>
<div class="t c" style="left:429.42px;top:519.4px;width:24px;height:18px;line-height:18px;color:#c5dcf3;font-size:12.5px;letter-spacing:-.4px">2</div>
<div class="t c" style="left:290.4px;top:538.15px;width:24px;height:18px;line-height:18px;color:#f3c4c8;font-size:12.5px;letter-spacing:-.4px">3</div>
<div class="t c" style="left:313.57px;top:538.15px;width:24px;height:18px;line-height:18px;color:#c9c9c9;font-size:12.5px;letter-spacing:-.4px">4</div>
<div class="t c" style="left:336.74px;top:538.15px;width:24px;height:18px;line-height:18px;color:#c9c9c9;font-size:12.5px;letter-spacing:-.4px">5</div>
<div class="t c" style="left:359.91px;top:538.15px;width:24px;height:18px;line-height:18px;color:#c9c9c9;font-size:12.5px;letter-spacing:-.4px">6</div>
<div class="t c" style="left:383.08px;top:538.15px;width:24px;height:18px;line-height:18px;color:#c9c9c9;font-size:12.5px;letter-spacing:-.4px">7</div>
<div class="t c" style="left:406.25px;top:538.15px;width:24px;height:18px;line-height:18px;color:#c9c9c9;font-size:12.5px;letter-spacing:-.4px">8</div>
<div class="t c" style="left:429.42px;top:538.15px;width:24px;height:18px;line-height:18px;color:#c5dcf3;font-size:12.5px;letter-spacing:-.4px">9</div>
<div style="left:456px;top:393px;width:253px;height:168px;background:#fff;border:1px solid #a9a9a9"></div>
<div style="left:457px;top:394px;width:251px;height:22px;background:#c6d6e7"></div>
<div style="left:457px;top:416px;width:251px;height:1px;background:#b4bfcc"></div>
<svg style="left:466px;top:397px" width="16" height="16" viewBox="0 0 16 16"><circle cx="8" cy="8" r="7.500" fill="#8e8e8e"/><circle cx="8" cy="8" r="6" fill="#a9a9a9"/><path d="M8 3.200l1.500 3.200 3.400.4-2.500 2.300.7 3.400L8 10.800l-3.100 1.700.7-3.400-2.500-2.300 3.400-.4z" fill="#e9e9e9"/></svg>
<div class="t k" style="left:485px;top:396px;width:60px;height:19px;line-height:19px;">접수메모</div>
<div class="t" style="left:618px;top:396px;width:66px;height:19px;line-height:19px;letter-spacing:-.2px">2023-08-28</div>
<svg style="left:682px;top:396px" width="18" height="18" viewBox="0 0 18 18"><rect x=".5" y=".5" width="17" height="17" fill="#fff" stroke="#555"/><rect x="1" y="1" width="16" height="5" fill="#3b78c9"/><circle cx="9" cy="3.500" r="1" fill="#fff"/><text x="9" y="15.500" font-family="Liberation Sans,sans-serif" font-size="10.500" font-weight="bold" fill="#444" text-anchor="middle">15</text></svg>
<div style="left:457px;top:417px;width:88px;height:21px;background:#fdd97a"></div>
<div class="t c" style="left:457px;top:418px;width:88px;height:20px;line-height:20px;color:#333;letter-spacing:-.2px">2023-08-28</div>
<div style="left:545px;top:417px;width:1px;height:143px;background:#bdbdbd"></div>
<div style="left:710px;top:393px;width:194px;height:168px;background:#fff;border:1px solid #a9a9a9"></div>
<div style="left:711px;top:394px;width:192px;height:22px;background:#c6d6e7"></div>
<div style="left:711px;top:416px;width:192px;height:1px;background:#b4bfcc"></div>
<div class="t c k" style="left:711px;top:396px;width:192px;height:19px;line-height:19px;">특이사항</div>
<div style="left:104px;top:566px;width:800px;height:24px;background:#dff1ed;border:1px solid #b4c8c4"></div>
<div class="t" style="left:115.5px;top:568.5px;width:64px;height:19px;line-height:19px;letter-spacing:.7px">최초내원일</div>
<div class="t b" style="left:178.5px;top:568.5px;width:75px;height:19px;line-height:19px;color:#a93a32;font-size:12.5px;letter-spacing:.55px">2023-04-25</div>
<div class="t" style="left:263.5px;top:568.5px;width:64px;height:19px;line-height:19px;letter-spacing:.7px">최종내원일</div>
<div class="t b" style="left:326.5px;top:568.5px;width:75px;height:19px;line-height:19px;color:#a93a32;font-size:12.5px;letter-spacing:.55px">2023-04-25</div>
<svg style="left:414px;top:567px" width="18" height="22" viewBox="0 0 18 22"><path d="M5 4a2.500 2.500 0 015 0v8.500a5 5 0 11-5 0z" fill="#fbe08a" stroke="#d9b45f" stroke-width="1"/><circle cx="7.500" cy="16.300" r="3.400" fill="#ff8a65"/><rect x="6.200" y="8" width="2.600" height="7" rx="1.300" fill="#ff8a65"/><path d="M12 5h4M12 8h3M12 11h4" stroke="#aaa" stroke-width="1"/></svg>
<div class="t b" style="left:439.5px;top:568.5px;width:75px;height:19px;line-height:19px;color:#a93a32;font-size:12.5px;letter-spacing:.55px">2023-06-15</div>
<div style="left:682px;top:571px;width:14px;height:14px;background:#d9d9d9;border:1px solid #c6c6c6;border-radius:2px"></div>
<svg style="left:684px;top:573px" width="10" height="10" viewBox="0 0 10 10"><path d="M1.300 5l2.500 3L8.700 1.800" fill="none" stroke="#fff" stroke-width="1.700"/></svg>
<div class="t" style="left:701.5px;top:568.5px;width:40px;height:19px;line-height:19px;letter-spacing:0">임산부</div>
<div style="left:744px;top:571px;width:14px;height:14px;background:#0e7c80;border:1px solid #0a6468;border-radius:2px"></div>
<svg style="left:746px;top:573px" width="10" height="10" viewBox="0 0 10 10"><path d="M1.300 5l2.500 3L8.700 1.800" fill="none" stroke="#fff" stroke-width="1.700"/></svg>
<div class="t" style="left:763.5px;top:568.5px;width:68px;height:19px;line-height:19px;font-size:11.5px;letter-spacing:0"><span style="letter-spacing:-1.1px">SMS</span>수신동의</div>
<div style="left:831px;top:571px;width:14px;height:14px;background:#d9d9d9;border:1px solid #c6c6c6;border-radius:2px"></div>
<svg style="left:833px;top:573px" width="10" height="10" viewBox="0 0 10 10"><path d="M1.300 5l2.500 3L8.700 1.800" fill="none" stroke="#fff" stroke-width="1.700"/></svg>
<div class="t" style="left:851px;top:568.5px;width:30px;height:19px;line-height:19px;letter-spacing:0">응급</div>
<div class="btn" style="left:880px;top:568px;width:21px;height:19px;border-radius:3px;border-color:#adadad"></div>
<div class="t c b nv" style="left:880px;top:565px;width:22px;height:19px;line-height:19px;letter-spacing:1.5px;font-size:13px">...</div>
<div style="left:108px;top:593px;width:70px;height:21px;background:#4f74a4;border-radius:4px 4px 0 0"></div>
<div class="t c b w" style="left:108px;top:594px;width:70px;height:20px;line-height:20px;font-size:12.5px;letter-spacing:1px">가족</div>
<div style="left:178px;top:593px;width:73px;height:20px;background:linear-gradient(#ffffff,#f6f6f6);border:1px solid #bdbdbd;border-left:none;border-bottom:none;border-radius:0 2px 0 0"></div>
<div class="t c k" style="left:178px;top:594.5px;width:73px;height:19px;line-height:19px;color:#111">기초검사</div>
<svg style="left:178px;top:594px" width="9" height="9" viewBox="0 0 9 9"><path d="M0 0h9L0 9z" fill="#f7b21a"/></svg>
<div style="left:251px;top:593px;width:68px;height:20px;background:linear-gradient(#ffffff,#f6f6f6);border:1px solid #bdbdbd;border-left:none;border-bottom:none;border-radius:0 2px 0 0"></div>
<div class="t c k" style="left:251px;top:594.5px;width:68px;height:19px;line-height:19px;color:#111">좌우검사</div>
<div style="left:319px;top:593px;width:69px;height:20px;background:linear-gradient(#ffffff,#f6f6f6);border:1px solid #bdbdbd;border-left:none;border-bottom:none;border-radius:0 2px 0 0"></div>
<div class="t c k" style="left:319px;top:594.5px;width:69px;height:19px;line-height:19px;color:#111">직장</div>
<div style="left:388px;top:593px;width:71px;height:20px;background:linear-gradient(#ffffff,#f6f6f6);border:1px solid #bdbdbd;border-left:none;border-bottom:none;border-radius:0 2px 0 0"></div>
<div class="t c k" style="left:388px;top:594.5px;width:71px;height:19px;line-height:19px;color:#111">소개자</div>
<div style="left:459px;top:593px;width:73px;height:20px;background:linear-gradient(#ffffff,#f6f6f6);border:1px solid #bdbdbd;border-left:none;border-bottom:none;border-radius:0 2px 0 0"></div>
<div class="t c k" style="left:459px;top:594.5px;width:73px;height:19px;line-height:19px;color:#111">진료상담</div>
<div style="left:532px;top:593px;width:69px;height:20px;background:linear-gradient(#ffffff,#f6f6f6);border:1px solid #bdbdbd;border-left:none;border-bottom:none;border-radius:0 2px 0 0"></div>
<div class="t c" style="left:532px;top:594.5px;width:69px;height:19px;line-height:19px;color:#111;font-family:'Liberation Mono',monospace;font-size:11.5px;letter-spacing:-.9px">CRM</div>
<div style="left:601px;top:593px;width:73px;height:20px;background:linear-gradient(#ffffff,#f6f6f6);border:1px solid #bdbdbd;border-left:none;border-bottom:none;border-radius:0 2px 0 0"></div>
<div class="t c k" style="left:601px;top:594.5px;width:73px;height:19px;line-height:19px;color:#111">진료내역</div>
<svg style="left:601px;top:594px" width="9" height="9" viewBox="0 0 9 9"><path d="M0 0h9L0 9z" fill="#f7b21a"/></svg>
<div style="left:674px;top:593px;width:74px;height:20px;background:linear-gradient(#ffffff,#f6f6f6);border:1px solid #bdbdbd;border-left:none;border-bottom:none;border-radius:0 2px 0 0"></div>
<div class="t c k" style="left:674px;top:594.5px;width:74px;height:19px;line-height:19px;color:#111">예약내역</div>
<svg style="left:674px;top:594px" width="9" height="9" viewBox="0 0 9 9"><path d="M0 0h9L0 9z" fill="#f7b21a"/></svg>
<div style="left:748px;top:593px;width:73px;height:20px;background:linear-gradient(#ffffff,#f6f6f6);border:1px solid #bdbdbd;border-left:none;border-bottom:none;border-radius:0 2px 0 0"></div>
<div class="t c k" style="left:748px;top:594.5px;width:73px;height:19px;line-height:19px;color:#111">지원사업</div>
<div style="left:821px;top:593px;width:73px;height:20px;background:linear-gradient(#ffffff,#f6f6f6);border:1px solid #bdbdbd;border-left:none;border-bottom:none;border-radius:0 2px 0 0"></div>
<div class="t c k" style="left:821px;top:594.5px;width:73px;height:19px;line-height:19px;color:#111">산부인과</div>
<div style="left:104px;top:613px;width:800px;height:264px;background:#f2f2f2;border:1px solid #b5b5b5"></div>
<div class="btn" style="left:110px;top:618px;width:90px;height:22px;border-radius:3px;border-color:#b0b0b0"></div>
<div class="t c b nv" style="left:110px;top:618.5px;width:90px;height:21px;line-height:21px;font-size:12.5px;letter-spacing:1.4px;word-spacing:2px">가족 차트</div>
<div style="left:813px;top:618px;width:85px;height:22px;background:linear-gradient(#7a9dc6,#5a80ad 50%,#466b9a);border:1px solid #4a6a94;border-radius:4px"></div>
<div class="t c b w" style="left:813px;top:618.5px;width:85px;height:21px;line-height:21px;font-size:12.5px;letter-spacing:1.4px;word-spacing:2px">가족 등록</div>
<div style="left:105px;top:645px;width:798px;height:231px;background:#fff;border-top:1px solid #bdbdbd"></div>
<div class="gh" style="left:105px;top:646px;width:90px;height:23px;"></div>
<div class="t c k" style="left:105px;top:646px;width:90px;height:22px;line-height:22px;">구분</div>
<div class="gh" style="left:195px;top:646px;width:100px;height:23px;"></div>
<div class="t c k" style="left:195px;top:646px;width:100px;height:22px;line-height:22px;">관계</div>
<div class="gh" style="left:295px;top:646px;width:110px;height:23px;"></div>
<div class="t c k" style="left:295px;top:646px;width:110px;height:22px;line-height:22px;">이름</div>
<div class="gh" style="left:405px;top:646px;width:90px;height:23px;"></div>
<div class="t c k" style="left:405px;top:646px;width:90px;height:22px;line-height:22px;">차트번호</div>
<div class="gh" style="left:495px;top:646px;width:52px;height:23px;"></div>
<div class="t c k" style="left:495px;top:646px;width:52px;height:22px;line-height:22px;">나이</div>
<div class="gh" style="left:547px;top:646px;width:340px;height:23px;"></div>
<div class="t c k" style="left:547px;top:646px;width:340px;height:22px;line-height:22px;">가족메모</div>
<div class="sb" style="left:887px;top:646px;width:16px;height:230px;"></div>
<svg style="left:890.500px;top:674px" width="9" height="6" viewBox="0 0 9 6"><path d="M1 5l3.500-3.500L8 5" fill="none" stroke="#c9c9c9" stroke-width="1.200"/></svg>
<svg style="left:890.500px;top:864px" width="9" height="6" viewBox="0 0 9 6"><path d="M1 1l3.500 3.500L8 1" fill="none" stroke="#c9c9c9" stroke-width="1.200"/></svg>
<div style="left:101px;top:880px;width:1450px;height:34px;background:#eeeee7"></div>
<div class="btn" style="left:105px;top:883px;width:109px;height:28px;border-radius:4px;border-color:#c2c2c2;background:linear-gradient(#ffffff,#f6f6f6 50%,#ececec)"></div>
<div class="t b nv" style="left:105.5px;top:883.500px;width:108px;height:27px;line-height:27px;text-align:center;font-size:12.500px;letter-spacing:1.2px"><svg style="position:static;vertical-align:-4px;margin-right:3px" width="17" height="17" viewBox="0 0 17 17"><rect x="1" y="1" width="15" height="15" rx="1.500" fill="#4d8fe0" stroke="#2a62b0"/><rect x="4" y="1.500" width="8" height="5" fill="#e8f0fb"/><rect x="3.500" y="9" width="10" height="6.500" fill="#fff"/><path d="M4.500 11.500h8M4.500 13.500h8" stroke="#7dc46a" stroke-width="1.200"/></svg>저장(F7)</div>
<div class="btn" style="left:216px;top:883px;width:109px;height:28px;border-radius:4px;border-color:#c2c2c2;background:linear-gradient(#ffffff,#f6f6f6 50%,#ececec)"></div>
<div class="t b nv" style="left:216.5px;top:883.500px;width:108px;height:27px;line-height:27px;text-align:center;font-size:12.500px;letter-spacing:1.3px"><svg style="position:static;vertical-align:-4px;margin-right:3px" width="17" height="17" viewBox="0 0 17 17"><path d="M8 2q4 0 4.500 6l1.500 5H2l1.500-5Q4 2 8 2z" fill="#e4b545" stroke="#a87a18" stroke-width=".8"/><circle cx="8" cy="15" r="1.500" fill="#a87a18"/><path d="M13 1v6M10 4h6" stroke="#27a232" stroke-width="2.200"/></svg>접수(Insert)</div>
<div class="btn" style="left:327px;top:883px;width:109px;height:28px;border-radius:4px;border-color:#c2c2c2;background:linear-gradient(#ffffff,#f6f6f6 50%,#ececec)"></div>
<div class="t b nv" style="left:327.5px;top:883.500px;width:108px;height:27px;line-height:27px;text-align:center;font-size:12.500px;letter-spacing:1.2px"><svg style="position:static;vertical-align:-4px;margin-right:3px" width="17" height="17" viewBox="0 0 17 17"><rect x="3" y="1" width="10" height="14" fill="#fff" stroke="#888"/><circle cx="6" cy="8" r="3.500" fill="#eef" stroke="#444" stroke-width="1.300"/><path d="M3.500 10.500L1 14" stroke="#444" stroke-width="1.800"/><path d="M8 13l7-7 1.500 1.500-7 7-2.500.8z" fill="#f2a12a" stroke="#b5651d" stroke-width=".6"/></svg>색인(F1)</div>
<div class="btn" style="left:438px;top:883px;width:109px;height:28px;border-radius:4px;border-color:#c2c2c2;background:linear-gradient(#ffffff,#f6f6f6 50%,#ececec)"></div>
<div class="t b nv" style="left:438.5px;top:883.500px;width:108px;height:27px;line-height:27px;text-align:center;font-size:12.500px;letter-spacing:0.9px"><svg style="position:static;vertical-align:-4px;margin-right:3px" width="17" height="17" viewBox="0 0 17 17"><rect x="2" y="1" width="11" height="15" fill="#fff" stroke="#667"/><path d="M4 4h7M4 6.500h7M4 9h5M4 11.500h4" stroke="#667" stroke-width="1"/><path d="M7 12l3 3 6-7" fill="none" stroke="#2aa12e" stroke-width="2.400"/></svg>완료내역(F2)</div>
<div class="btn" style="left:549px;top:883px;width:109px;height:28px;border-radius:4px;border-color:#c2c2c2;background:linear-gradient(#ffffff,#f6f6f6 50%,#ececec)"></div>
<div class="t b nv" style="left:549.5px;top:883.500px;width:108px;height:27px;line-height:27px;text-align:center;font-size:12.500px;letter-spacing:0.9px"><svg style="position:static;vertical-align:-4px;margin-right:3px" width="17" height="17" viewBox="0 0 17 17"><rect x="2" y="1" width="11" height="15" fill="#fff" stroke="#667"/><path d="M4 4h7M4 6.500h7M4 9h5M4 11.500h4" stroke="#667" stroke-width="1"/><circle cx="12" cy="12.500" r="4" fill="#3a7fd8"/><path d="M12 10v.8M12 12v3" stroke="#fff" stroke-width="1.500"/></svg>현황조회(F3)</div>
<div class="btn" style="left:660px;top:883px;width:109px;height:28px;border-radius:4px;border-color:#c2c2c2;background:linear-gradient(#ffffff,#f6f6f6 50%,#ececec)"></div>
<div class="t b nv" style="left:660.5px;top:883.500px;width:108px;height:27px;line-height:27px;text-align:center;font-size:12.500px;letter-spacing:1.2px"><svg style="position:static;vertical-align:-4px;margin-right:3px" width="17" height="17" viewBox="0 0 17 17"><path d="M2 15l4-4M5 9l3 3 6-6-3-3zM12 2l3 3M10 4l3 3" stroke="#6b7fa0" stroke-width="1.600" fill="#e6eefb"/></svg>백신(F4)</div>
<div class="btn" style="left:771px;top:883px;width:109px;height:28px;border-radius:4px;border-color:#c2c2c2;background:linear-gradient(#ffffff,#f6f6f6 50%,#ececec)"></div>
<div class="t b nv" style="left:771.5px;top:883.500px;width:108px;height:27px;line-height:27px;text-align:center;font-size:12.500px;letter-spacing:1.2px"><svg style="position:static;vertical-align:-4px;margin-right:3px" width="17" height="17" viewBox="0 0 17 17"><rect x="1.500" y="2.500" width="14" height="13" fill="#fff" stroke="#2c6fc0"/><rect x="1.500" y="2.500" width="14" height="4" fill="#d23b30"/><path d="M5 1v4M12 1v4" stroke="#2c6fc0" stroke-width="1.600"/><text x="8.500" y="14.500" font-family="Liberation Sans,sans-serif" font-size="8.500" font-weight="bold" fill="#2c4f8c" text-anchor="middle">17</text></svg>예약(F5)</div>
<div class="btn" style="left:882px;top:883px;width:109px;height:28px;border-radius:4px;border-color:#c2c2c2;background:linear-gradient(#ffffff,#f6f6f6 50%,#ececec)"></div>
<div class="t b nv" style="left:882.5px;top:883.500px;width:108px;height:27px;line-height:27px;text-align:center;font-size:12.500px;letter-spacing:1.2px"><svg style="position:static;vertical-align:-4px;margin-right:3px" width="17" height="17" viewBox="0 0 17 17"><rect x="3" y="2" width="13" height="13" fill="#fff" stroke="#3f8f58"/><rect x="4" y="3.500" width="11" height="3" fill="#62b57a"/><rect x="4" y="8" width="11" height="3" fill="#62b57a"/><path d="M1 5h3M1 9h3M1 12.500h3" stroke="#58a" stroke-width="1.200"/></svg>차트(F6)</div>
<div class="btn" style="left:993px;top:883px;width:109px;height:28px;border-radius:4px;border-color:#c2c2c2;background:linear-gradient(#ffffff,#f6f6f6 50%,#ececec)"></div>
<div class="t b nv" style="left:993.5px;top:883.500px;width:108px;height:27px;line-height:27px;text-align:center;font-size:12.500px;letter-spacing:1.2px"><svg style="position:static;vertical-align:-4px;margin-right:3px" width="17" height="17" viewBox="0 0 17 17"><path d="M6 1.500h4M7 1.500v5L2.500 15q-.8 1.500 1 1.500h9q1.800 0 1-1.500L9 6.500v-5" fill="#fff" stroke="#9aa" stroke-width="1"/><path d="M5 11h6l2.200 4.500H2.800z" fill="#e8417f"/></svg>검사실</div>
<div class="btn" style="left:1104px;top:883px;width:109px;height:28px;border-radius:4px;border-color:#c2c2c2;background:linear-gradient(#ffffff,#f6f6f6 50%,#ececec)"></div>
<div class="t b nv" style="left:1104.5px;top:883.500px;width:108px;height:27px;line-height:27px;text-align:center;font-size:12.500px;letter-spacing:1px"><svg style="position:static;vertical-align:-4px;margin-right:3px" width="17" height="17" viewBox="0 0 17 17"><path d="M1 8l5-3v6z" fill="#2d9a3a"/><rect x="6" y="2" width="6" height="6" rx="3" fill="#d8322a"/><path d="M7 9l5-1.500 3 2.500v5l-5 1.500-3-2.500z" fill="#2e86d8"/><path d="M7 9l3 2.500 5-1.500" fill="none" stroke="#9cc8f2" stroke-width=".8"/></svg>물리치료실</div>
<div class="btn" style="left:1215px;top:883px;width:109px;height:28px;border-radius:4px;border-color:#c2c2c2;background:linear-gradient(#ffffff,#f6f6f6 50%,#ececec)"></div>
<div class="t b nv" style="left:1215.5px;top:883.500px;width:108px;height:27px;line-height:27px;text-align:center;font-size:12.500px;letter-spacing:1px"><svg style="position:static;vertical-align:-4px;margin-right:3px" width="17" height="17" viewBox="0 0 17 17"><path d="M3 1l3 1-1 3.500-3-1z" fill="#7a4a22"/><path d="M2 5l5 1.500 7 7.500-6 2.500Q4 11 2 5z" fill="#b5793a" stroke="#7a4a22" stroke-width=".8"/><path d="M6 9l5 5M4.500 8l4.500 7" stroke="#7a4a22" stroke-width=".7"/></svg>화면정리</div>
<div class="btn" style="left:1326px;top:883px;width:109px;height:28px;border-radius:4px;border-color:#c2c2c2;background:linear-gradient(#ffffff,#f6f6f6 50%,#ececec)"></div>
<div class="t b nv" style="left:1326.5px;top:883.500px;width:108px;height:27px;line-height:27px;text-align:center;font-size:12.500px;letter-spacing:1.2px"><svg style="position:static;vertical-align:-4px;margin-right:3px" width="17" height="17" viewBox="0 0 17 17"><path d="M1 8l5-3v6z" fill="#2d9a3a"/><rect x="6" y="2" width="6" height="6" rx="3" fill="#d8322a"/><path d="M7 9l5-1.500 3 2.500v5l-5 1.500-3-2.500z" fill="#2e86d8"/><path d="M7 9l3 2.500 5-1.500" fill="none" stroke="#9cc8f2" stroke-width=".8"/></svg>PT 오더</div>
<div class="btn" style="left:1437px;top:883px;width:109px;height:28px;border-radius:4px;border-color:#c2c2c2;background:linear-gradient(#ffffff,#f6f6f6 50%,#ececec)"></div>
<div class="t b nv" style="left:1437.5px;top:883.500px;width:108px;height:27px;line-height:27px;text-align:center;font-size:12.500px;letter-spacing:1px"><svg style="position:static;vertical-align:-4px;margin-right:3px" width="17" height="17" viewBox="0 0 17 17"><path d="M6 1.500h4M7 1.500v5L2.500 15q-.8 1.500 1 1.500h9q1.800 0 1-1.500L9 6.500v-5" fill="#fff" stroke="#9aa" stroke-width="1"/><path d="M5 11h6l2.200 4.500H2.800z" fill="#e8417f"/></svg>오더<span style="font-size:15px;letter-spacing:0;vertical-align:-1px">▼</span></div>
<div style="left:0px;top:913px;width:1551px;height:20px;background:#efeded"></div>
<div style="left:4px;top:917px;width:60px;height:15px;border:1px solid #a8a8a8;border-right-color:#fff;border-bottom-color:#fff;background:#f1efef"></div>
<div class="t c" style="left:6.5px;top:917px;width:54px;height:14px;line-height:14px;color:#111;">16:28</div>
<div style="left:65px;top:917px;width:99px;height:15px;border:1px solid #a8a8a8;border-right-color:#fff;border-bottom-color:#fff;background:#f1efef"></div>
<div class="t r" style="left:67px;top:917px;width:93.5px;height:14px;line-height:14px;color:#111;">3</div>
<div style="left:165px;top:917px;width:80px;height:15px;border:1px solid #a8a8a8;border-right-color:#fff;border-bottom-color:#fff;background:#f1efef"></div>
<div class="t" style="left:167px;top:917px;width:74px;height:14px;line-height:14px;color:#111;padding-left:3px;letter-spacing:.7px">홍길동</div>
<div style="left:245px;top:917px;width:99px;height:15px;border:1px solid #a8a8a8;border-right-color:#fff;border-bottom-color:#fff;background:#f1efef"></div>
<div style="left:248px;top:919px;width:92px;height:10px;background:linear-gradient(90deg,#cfcfcf 0%,#b5b5b5 12%,#a2a2a2 30%,#bdbdbd 36%,#c6c6c6 60%,#d2d2d2 85%,#e2e2e2 100%);filter:blur(.6px)"></div>
<div style="left:345px;top:917px;width:30px;height:15px;border:1px solid #a8a8a8;border-right-color:#fff;border-bottom-color:#fff;background:#f1efef"></div>
<div class="t c" style="left:347px;top:917px;width:24px;height:14px;line-height:14px;color:#111;"><span class="k">남</span></div>
<div style="left:374px;top:917px;width:50px;height:15px;border:1px solid #a8a8a8;border-right-color:#fff;border-bottom-color:#fff;background:#f1efef"></div>
<div class="t c" style="left:376.5px;top:917px;width:44px;height:14px;line-height:14px;color:#111;">48<span class="k">세</span></div>
<div style="left:425px;top:917px;width:140px;height:15px;border:1px solid #a8a8a8;border-right-color:#fff;border-bottom-color:#fff;background:#f1efef"></div>
<div class="t" style="left:427px;top:917px;width:134px;height:14px;line-height:14px;color:#111;padding-left:71px;letter-spacing:.7px">건강보험</div>
<div style="left:564px;top:917px;width:101px;height:15px;border:1px solid #a8a8a8;border-right-color:#fff;border-bottom-color:#fff;background:#f1efef"></div>
<div style="left:665px;top:917px;width:79px;height:15px;border:1px solid #a8a8a8;border-right-color:#fff;border-bottom-color:#fff;background:#f1efef"></div>
<div class="t" style="left:667px;top:917px;width:73.5px;height:14px;line-height:14px;color:#111;padding-left:2px;letter-spacing:-.4px">123456789</div>
<div style="left:744px;top:917px;width:81px;height:15px;border:1px solid #a8a8a8;border-right-color:#fff;border-bottom-color:#fff;background:#f1efef"></div>
<div class="t" style="left:746px;top:917px;width:75px;height:14px;line-height:14px;color:#111;padding-left:3px;letter-spacing:.7px">홍길순</div>
<div style="left:824px;top:917px;width:150px;height:15px;border:1px solid #a8a8a8;border-right-color:#fff;border-bottom-color:#fff;background:#f1efef"></div>
<div class="t" style="left:826.5px;top:917px;width:143.5px;height:14px;line-height:14px;color:#111;padding-left:5px;letter-spacing:-.1px">010-1111-2222</div>
<div class="t" style="left:979px;top:917px;width:420px;height:14px;line-height:14px;letter-spacing:.6px">(14353) 경기 광명시 일직로 43 GIDC C동 25층</div>
<div style="left:908px;top:127px;width:643px;height:753px;background:#fff"></div>
<div style="left:978px;top:99px;width:75px;height:26px;background:linear-gradient(#ffffff,#f1f1f1);border:1px solid #bdbdbd;border-radius:1px"></div>
<div style="left:1056px;top:99px;width:70px;height:26px;background:linear-gradient(#ffffff,#f1f1f1);border:1px solid #bdbdbd;border-radius:1px"></div>
<div style="left:1129px;top:99px;width:75px;height:26px;background:linear-gradient(#ffffff,#f1f1f1);border:1px solid #bdbdbd;border-radius:1px"></div>
<div style="left:1207px;top:99px;width:63px;height:26px;background:linear-gradient(#ffffff,#f1f1f1);border:1px solid #bdbdbd;border-radius:1px"></div>
<div style="left:1273px;top:99px;width:98px;height:26px;background:linear-gradient(#ffffff,#f1f1f1);border:1px solid #bdbdbd;border-radius:1px"></div>
<div style="left:1376px;top:99px;width:72px;height:26px;background:linear-gradient(#ffffff,#f1f1f1);border:1px solid #bdbdbd;border-radius:1px"></div>
<div class="t c b nv" style="left:1376px;top:99.5px;width:72px;height:25px;line-height:25px;font-size:12.5px;letter-spacing:1.1px">화면설정</div>
<div style="left:1453px;top:99px;width:72px;height:26px;background:linear-gradient(#ffffff,#f1f1f1);border:1px solid #bdbdbd;border-radius:1px"></div>
<div class="t c b nv" style="left:1453px;top:99.5px;width:72px;height:25px;line-height:25px;font-size:12.5px;letter-spacing:1.1px">접수관리</div>
<div class="t b nv" style="left:1348.5px;top:99.5px;width:20px;height:25px;line-height:25px;font-size:12.5px;letter-spacing:1.1px">보</div>
<div style="left:1526px;top:131px;width:24px;height:100px;background:linear-gradient(90deg,#f3f3f3,#ffffff 60%);border:1px solid #8f8f8f;border-right:none;border-radius:7px 0 0 7px"></div>
<svg style="left:1533px;top:175px" width="8" height="12" viewBox="0 0 8 12"><path d="M8 0v12L0 6z" fill="#0d2fa0"/></svg>
<div style="left:907px;top:150px;width:618px;height:352px;background:#fff;border:1px solid #b5b5b5"></div>
<div style="left:908px;top:151px;width:616px;height:33px;background:#f0f0f0"></div>
<div class="btn" style="left:1361px;top:155px;width:46px;height:24px;border-radius:3px;border-color:#b7b7b7"></div>
<svg style="left:1376px;top:159px" width="16" height="16" viewBox="0 0 16 16"><path d="M3 8a5 5 0 115 5" fill="none" stroke="#5cb84a" stroke-width="2.600"/><path d="M9.500 9.500l-4 3.500 4.500 2.500z" fill="#5cb84a"/><circle cx="8" cy="8" r="1.800" fill="none" stroke="#5cb84a" stroke-width="1.600"/></svg>
<div class="btn" style="left:1410px;top:155px;width:110px;height:24px;border-radius:3px;border-color:#b7b7b7"></div>
<div class="t c b nv" style="left:1410px;top:155.5px;width:110px;height:23px;line-height:23px;font-size:12.5px;letter-spacing:1.1px">접수순서변경</div>
<div style="left:908px;top:184px;width:616px;height:1px;background:#c9c9c9"></div>
<div class="gh" style="left:1312px;top:185px;width:51px;height:22px;"></div>
<div class="gh" style="left:1363px;top:185px;width:60px;height:22px;"></div>
<div class="t c k" style="left:1363px;top:185px;width:60px;height:21px;line-height:21px;">대기시간</div>
<div class="gh" style="left:1423px;top:185px;width:65px;height:22px;"></div>
<div class="t c k" style="left:1423px;top:185px;width:65px;height:21px;line-height:21px;">진료과</div>
<div class="gh" style="left:1488px;top:185px;width:20px;height:22px;"></div>
<div class="t" style="left:1350.5px;top:185px;width:12px;height:21px;line-height:21px;"><span class="k">간</span></div>
<div class="sb" style="left:1508px;top:207px;width:16px;height:294px;"></div>
<svg style="left:1511.5px;top:214px" width="9" height="6" viewBox="0 0 9 6"><path d="M1 5l3.500-3.500L8 5" fill="none" stroke="#c9c9c9" stroke-width="1.200"/></svg>
<svg style="left:1511.5px;top:489px" width="9" height="6" viewBox="0 0 9 6"><path d="M1 1l3.500 3.500L8 1" fill="none" stroke="#c9c9c9" stroke-width="1.200"/></svg>
<div style="left:907px;top:505px;width:618px;height:372px;background:#fff;border:1px solid #b5b5b5"></div>
<div style="left:908px;top:506px;width:616px;height:33px;background:#f0f0f0"></div>
<div class="btn" style="left:1300px;top:512px;width:56px;height:21px;border-radius:3px;border-color:#b0b0b0"></div>
<div style="left:1360px;top:512px;width:65px;height:21px;background:linear-gradient(#7a9dc6,#5a80ad 50%,#466b9a);border:1px solid #4a6a94;border-radius:4px"></div>
<div class="t c b w" style="left:1360px;top:512px;width:65px;height:21px;line-height:21px;font-size:12.5px;letter-spacing:1px">현금수납</div>
<div style="left:1428px;top:512px;width:65px;height:21px;background:linear-gradient(#d3708a,#b4405e);border:1px solid #a33c57;border-radius:3px"></div>
<div class="t c b w" style="left:1428px;top:512px;width:65px;height:21px;line-height:21px;font-size:12.5px;letter-spacing:1px">상세수납</div>
<div class="btn" style="left:1496px;top:512px;width:24px;height:21px;border-radius:3px;border-color:#adadad"></div>
<div class="t c b nv" style="left:1496px;top:509px;width:25px;height:20px;line-height:20px;letter-spacing:1.500px;font-size:13px">...</div>
<div style="left:908px;top:538px;width:616px;height:1px;background:#c9c9c9"></div>
<div class="gh" style="left:1300px;top:539px;width:83px;height:22px;"></div>
<div class="gh" style="left:1383px;top:539px;width:90px;height:22px;"></div>
<div class="t c k" style="left:1383px;top:539px;width:90px;height:21px;line-height:21px;">미수금</div>
<div class="gh" style="left:1473px;top:539px;width:20px;height:22px;"></div>
<div class="gh" style="left:1493px;top:539px;width:15px;height:22px;"></div>
<div class="t k" style="left:1341.5px;top:539px;width:26px;height:21px;line-height:21px;">방법</div>
<div class="sb" style="left:1508px;top:561px;width:16px;height:315px;"></div>
<svg style="left:1511.5px;top:569px" width="9" height="6" viewBox="0 0 9 6"><path d="M1 5l3.500-3.500L8 5" fill="none" stroke="#c9c9c9" stroke-width="1.200"/></svg>
<svg style="left:1511.5px;top:865px" width="9" height="6" viewBox="0 0 9 6"><path d="M1 1l3.500 3.500L8 1" fill="none" stroke="#c9c9c9" stroke-width="1.200"/></svg>
<div style="left:909px;top:100px;width:442px;height:756px;background:#f3f3f3;border:1px solid #a6a6a6;border-radius:8px;box-shadow:3px 12px 36px rgba(0,0,0,.36);overflow:hidden">
<div style="left:-910px;top:-101px;width:1551px;height:935px">
<div style="left:910px;top:101px;width:440px;height:27px;background:#eaf3fa"></div>
<svg style="left:915px;top:107px" width="16" height="13" viewBox="0 0 16 13"><rect x=".5" y="1.500" width="14" height="10" fill="#fff" stroke="#555" stroke-width="1"/><rect x="2.500" y="5" width="2" height="5" fill="#2a7fd4"/><rect x="5.500" y="3.500" width="2" height="6.500" fill="#2a7fd4"/><rect x="8.500" y="6" width="2" height="4" fill="#e0532f"/><rect x="11.500" y="4.500" width="1.500" height="5.500" fill="#7cc"/></svg>
<div class="t" style="left:937px;top:104px;width:160px;height:20px;line-height:20px;font-size:12.5px;color:#111;letter-spacing:.1px">차트기록 - 홍길동 (3) M/48</div>
<div style="left:1095px;top:106px;width:100px;height:17px;background:#edf1f5"></div>
<svg style="left:1329px;top:108px" width="12" height="12" viewBox="0 0 12 12"><path d="M1 1l10 10M11 1L1 11" stroke="#222" stroke-width="1.200"/></svg>
<div style="left:910px;top:128px;width:440px;height:30px;background:#cfd9e8"></div>
<div style="left:920px;top:135px;width:6px;height:15px;background:linear-gradient(90deg,#6d6d6d,#bdbdbd 55%,#8e8e8e);border-radius:3px"></div>
<div class="t b" style="left:932px;top:133px;width:70px;height:19px;line-height:19px;font-size:13px;color:#222;letter-spacing:1.3px;word-spacing:1px">차트 기록</div>
<div style="left:915px;top:163px;width:430px;height:656px;background:#f0f0f0;border:1px solid #a2a2a2"></div>
<div style="left:916px;top:164px;width:54px;height:20px;background:#e5e5e5;border-right:1px solid #a2a2a2;border-bottom:1px solid #a2a2a2"></div>
<div class="t c" style="left:916px;top:164px;width:54px;height:19px;line-height:19px;font-size:12.5px;letter-spacing:-.5px">2023</div>
<div style="left:970px;top:164px;width:30px;height:20px;background:#f8f8f3;border-right:1px solid #a8a8a8;border-bottom:1px solid #a8a8a8"></div>
<div class="t c" style="left:970px;top:164px;width:30px;height:19px;line-height:19px;color:#a3a3a3;font-size:12.5px;letter-spacing:-.4px">1</div>
<div style="left:1000px;top:164px;width:30px;height:20px;background:#f8f8f3;border-right:1px solid #a8a8a8;border-bottom:1px solid #a8a8a8"></div>
<div class="t c" style="left:1000px;top:164px;width:30px;height:19px;line-height:19px;color:#a3a3a3;font-size:12.5px;letter-spacing:-.4px">2</div>
<div style="left:1030px;top:164px;width:30px;height:20px;background:#f8f8f3;border-right:1px solid #a8a8a8;border-bottom:1px solid #a8a8a8"></div>
<div class="t c" style="left:1030px;top:164px;width:30px;height:19px;line-height:19px;color:#a3a3a3;font-size:12.5px;letter-spacing:-.4px">3</div>
<div style="left:1060px;top:164px;width:30px;height:20px;background:#f8f8f3;border-right:1px solid #a8a8a8;border-bottom:1px solid #a8a8a8"></div>
<div class="t c b" style="left:1060px;top:164px;width:30px;height:19px;line-height:19px;color:#8a0c0c;font-family:'Liberation Serif',serif;font-size:14px">4</div>
<div style="left:1090px;top:164px;width:29px;height:20px;background:#f8f8f3;border-right:1px solid #a8a8a8;border-bottom:1px solid #a8a8a8"></div>
<div class="t c" style="left:1090px;top:164px;width:29px;height:19px;line-height:19px;color:#a3a3a3;font-size:12.5px;letter-spacing:-.4px">5</div>
<div style="left:1119px;top:164px;width:30px;height:20px;background:#f8f8f3;border-right:1px solid #a8a8a8;border-bottom:1px solid #a8a8a8"></div>
<div class="t c" style="left:1119px;top:164px;width:30px;height:19px;line-height:19px;color:#a3a3a3;font-size:12.5px;letter-spacing:-.4px">6</div>
<div style="left:1149px;top:164px;width:30px;height:20px;background:#f8f8f3;border-right:1px solid #a8a8a8;border-bottom:1px solid #a8a8a8"></div>
<div class="t c" style="left:1149px;top:164px;width:30px;height:19px;line-height:19px;color:#a3a3a3;font-size:12.5px;letter-spacing:-.4px">7</div>
<div style="left:1179px;top:164px;width:30px;height:20px;background:#f8f8f3;border-right:1px solid #a8a8a8;border-bottom:1px solid #a8a8a8"></div>
<div class="t c" style="left:1179px;top:164px;width:30px;height:19px;line-height:19px;color:#a3a3a3;font-size:12.5px;letter-spacing:-.4px">8</div>
<div style="left:1209px;top:164px;width:30px;height:20px;background:#f8f8f3;border-right:1px solid #a8a8a8;border-bottom:1px solid #a8a8a8"></div>
<div class="t c" style="left:1209px;top:164px;width:30px;height:19px;line-height:19px;color:#a3a3a3;font-size:12.5px;letter-spacing:-.4px">9</div>
<div style="left:1239px;top:164px;width:30px;height:20px;background:#f8f8f3;border-right:1px solid #a8a8a8;border-bottom:1px solid #a8a8a8"></div>
<div class="t c" style="left:1239px;top:164px;width:30px;height:19px;line-height:19px;color:#a3a3a3;font-size:12.5px;letter-spacing:-.4px">10</div>
<div style="left:1269px;top:164px;width:30px;height:20px;background:#f8f8f3;border-right:1px solid #a8a8a8;border-bottom:1px solid #a8a8a8"></div>
<div class="t c" style="left:1269px;top:164px;width:30px;height:19px;line-height:19px;color:#a3a3a3;font-size:12.5px;letter-spacing:-.4px">11</div>
<div style="left:1299px;top:164px;width:28px;height:20px;background:#f8f8f3;border-right:1px solid #a8a8a8;border-bottom:1px solid #a8a8a8"></div>
<div class="t c" style="left:1299px;top:164px;width:28px;height:19px;line-height:19px;color:#a3a3a3;font-size:12.5px;letter-spacing:-.4px">12</div>
<div style="left:916px;top:184px;width:54px;height:21px;background:#e5e5e5;border-right:1px solid #a2a2a2;border-bottom:1px solid #a2a2a2"></div>
<div class="t c" style="left:916px;top:184px;width:54px;height:20px;line-height:20px;font-size:12.5px;letter-spacing:-.5px">2022</div>
<div style="left:970px;top:184px;width:30px;height:21px;background:#f8f8f3;border-right:1px solid #a8a8a8;border-bottom:1px solid #a8a8a8"></div>
<div class="t c" style="left:970px;top:184px;width:30px;height:20px;line-height:20px;color:#a3a3a3;font-size:12.5px;letter-spacing:-.4px">1</div>
<div style="left:1000px;top:184px;width:30px;height:21px;background:#f8f8f3;border-right:1px solid #a8a8a8;border-bottom:1px solid #a8a8a8"></div>
<div class="t c" style="left:1000px;top:184px;width:30px;height:20px;line-height:20px;color:#a3a3a3;font-size:12.5px;letter-spacing:-.4px">2</div>
<div style="left:1030px;top:184px;width:30px;height:21px;background:#f8f8f3;border-right:1px solid #a8a8a8;border-bottom:1px solid #a8a8a8"></div>
<div class="t c" style="left:1030px;top:184px;width:30px;height:20px;line-height:20px;color:#a3a3a3;font-size:12.5px;letter-spacing:-.4px">3</div>
<div style="left:1060px;top:184px;width:30px;height:21px;background:#f8f8f3;border-right:1px solid #a8a8a8;border-bottom:1px solid #a8a8a8"></div>
<div class="t c" style="left:1060px;top:184px;width:30px;height:20px;line-height:20px;color:#a3a3a3;font-size:12.5px;letter-spacing:-.4px">4</div>
<div style="left:1090px;top:184px;width:29px;height:21px;background:#f8f8f3;border-right:1px solid #a8a8a8;border-bottom:1px solid #a8a8a8"></div>
<div class="t c" style="left:1090px;top:184px;width:29px;height:20px;line-height:20px;color:#a3a3a3;font-size:12.5px;letter-spacing:-.4px">5</div>
<div style="left:1119px;top:184px;width:30px;height:21px;background:#f8f8f3;border-right:1px solid #a8a8a8;border-bottom:1px solid #a8a8a8"></div>
<div class="t c" style="left:1119px;top:184px;width:30px;height:20px;line-height:20px;color:#a3a3a3;font-size:12.5px;letter-spacing:-.4px">6</div>
<div style="left:1149px;top:184px;width:30px;height:21px;background:#f8f8f3;border-right:1px solid #a8a8a8;border-bottom:1px solid #a8a8a8"></div>
<div class="t c" style="left:1149px;top:184px;width:30px;height:20px;line-height:20px;color:#a3a3a3;font-size:12.5px;letter-spacing:-.4px">7</div>
<div style="left:1179px;top:184px;width:30px;height:21px;background:#f8f8f3;border-right:1px solid #a8a8a8;border-bottom:1px solid #a8a8a8"></div>
<div class="t c" style="left:1179px;top:184px;width:30px;height:20px;line-height:20px;color:#a3a3a3;font-size:12.5px;letter-spacing:-.4px">8</div>
<div style="left:1209px;top:184px;width:30px;height:21px;background:#f8f8f3;border-right:1px solid #a8a8a8;border-bottom:1px solid #a8a8a8"></div>
<div class="t c" style="left:1209px;top:184px;width:30px;height:20px;line-height:20px;color:#a3a3a3;font-size:12.5px;letter-spacing:-.4px">9</div>
<div style="left:1239px;top:184px;width:30px;height:21px;background:#f8f8f3;border-right:1px solid #a8a8a8;border-bottom:1px solid #a8a8a8"></div>
<div class="t c" style="left:1239px;top:184px;width:30px;height:20px;line-height:20px;color:#a3a3a3;font-size:12.5px;letter-spacing:-.4px">10</div>
<div style="left:1269px;top:184px;width:30px;height:21px;background:#f8f8f3;border-right:1px solid #a8a8a8;border-bottom:1px solid #a8a8a8"></div>
<div class="t c" style="left:1269px;top:184px;width:30px;height:20px;line-height:20px;color:#a3a3a3;font-size:12.5px;letter-spacing:-.4px">11</div>
<div style="left:1299px;top:184px;width:28px;height:21px;background:#f8f8f3;border-right:1px solid #a8a8a8;border-bottom:1px solid #a8a8a8"></div>
<div class="t c" style="left:1299px;top:184px;width:28px;height:20px;line-height:20px;color:#a3a3a3;font-size:12.5px;letter-spacing:-.4px">12</div>
<div style="left:1178px;top:163px;width:31px;height:22px;border:2px solid #111"></div>
<div style="left:1327px;top:164px;width:17px;height:20px;background:linear-gradient(#f1f1f1,#d9d6d6)"></div>
<div style="left:1327px;top:184px;width:17px;height:21px;background:linear-gradient(#f1f1f1,#d9d6d6);border-bottom:1px solid #a8a8a8"></div>
<svg style="left:1330px;top:169px" width="11" height="9" viewBox="0 0 11 9"><path d="M5.500 0L11 9H0z" fill="#444"/></svg>
<svg style="left:1330px;top:190px" width="11" height="9" viewBox="0 0 11 9"><path d="M0 0h11L5.500 9z" fill="#444"/></svg>
<div style="left:916px;top:205px;width:428px;height:173px;background:#fff"></div>
<div style="left:916px;top:378px;width:428px;height:1px;background:#a2a2a2"></div>
<div class="gh" style="left:916px;top:205px;width:103px;height:23px;"></div>
<div class="t c " style="left:916px;top:205px;width:103px;height:22px;line-height:22px;"><span class="k">내원일</span></div>
<div class="gh" style="left:1019px;top:205px;width:23px;height:23px;"></div>
<div class="t c" style="left:1019px;top:205px;width:23px;height:22px;line-height:22px;"><span class="k">약</span></div>
<div class="gh" style="left:1042px;top:205px;width:23px;height:23px;"></div>
<div class="t c" style="left:1042px;top:205px;width:23px;height:22px;line-height:22px;"><span class="k">초</span></div>
<div class="gh" style="left:1065px;top:205px;width:23px;height:23px;"></div>
<div class="t c" style="left:1065px;top:205px;width:23px;height:22px;line-height:22px;"><span class="k">야</span></div>
<div class="gh" style="left:1088px;top:205px;width:23px;height:23px;"></div>
<div class="t c" style="left:1088px;top:205px;width:23px;height:22px;line-height:22px;"><span class="k">률</span></div>
<div class="gh" style="left:1111px;top:205px;width:23px;height:23px;"></div>
<div class="t c" style="left:1111px;top:205px;width:23px;height:22px;line-height:22px;"><span class="k">비</span></div>
<div class="gh" style="left:1134px;top:205px;width:30px;height:23px;"></div>
<div class="t c " style="left:1134px;top:205px;width:30px;height:22px;line-height:22px;"><span class="k">영상</span></div>
<div class="gh" style="left:1164px;top:205px;width:30px;height:23px;"></div>
<div class="t c " style="left:1164px;top:205px;width:30px;height:22px;line-height:22px;"><span class="k">처치</span></div>
<div class="gh" style="left:1194px;top:205px;width:30px;height:23px;"></div>
<div class="t c " style="left:1194px;top:205px;width:30px;height:22px;line-height:22px;"><span class="k">검사</span></div>
<div class="gh" style="left:1224px;top:205px;width:103px;height:23px;"></div>
<div class="t c " style="left:1224px;top:205px;width:103px;height:22px;line-height:22px;"><span class="k">진료의</span></div>
<div style="left:916px;top:228px;width:103px;height:20px;background:#ecd5ef;border-right:1px solid #c3b3c6;border-bottom:1px solid #c3b3c6"></div>
<div style="left:1019px;top:228px;width:23px;height:20px;background:#ecd5ef;border-right:1px solid #c3b3c6;border-bottom:1px solid #c3b3c6"></div>
<div style="left:1042px;top:228px;width:23px;height:20px;background:#ecd5ef;border-right:1px solid #c3b3c6;border-bottom:1px solid #c3b3c6"></div>
<div style="left:1065px;top:228px;width:23px;height:20px;background:#ecd5ef;border-right:1px solid #c3b3c6;border-bottom:1px solid #c3b3c6"></div>
<div style="left:1088px;top:228px;width:23px;height:20px;background:#ecd5ef;border-right:1px solid #c3b3c6;border-bottom:1px solid #c3b3c6"></div>
<div style="left:1111px;top:228px;width:23px;height:20px;background:#ecd5ef;border-right:1px solid #c3b3c6;border-bottom:1px solid #c3b3c6"></div>
<div style="left:1134px;top:228px;width:30px;height:20px;background:#ecd5ef;border-right:1px solid #c3b3c6;border-bottom:1px solid #c3b3c6"></div>
<div style="left:1164px;top:228px;width:30px;height:20px;background:#ecd5ef;border-right:1px solid #c3b3c6;border-bottom:1px solid #c3b3c6"></div>
<div style="left:1194px;top:228px;width:30px;height:20px;background:#ecd5ef;border-right:1px solid #c3b3c6;border-bottom:1px solid #c3b3c6"></div>
<div style="left:1224px;top:228px;width:103px;height:20px;background:#ecd5ef;border-right:1px solid #c3b3c6;border-bottom:1px solid #c3b3c6"></div>
<div class="t c" style="left:916px;top:228.5px;width:103px;height:19px;line-height:19px;color:#333;letter-spacing:-.25px">2023-04-25</div>
<div class="t c k" style="left:1224px;top:228.5px;width:103px;height:19px;line-height:19px;color:#222">배우미</div>
<svg style="left:1047px;top:231px" width="11" height="11" viewBox="0 0 11 11"><path d="M.500 5.500l1.800-1.300q1 1.200 1.700 3.300Q6.500 3.500 10.800.800q-4 4.500-6.300 10h-1.300Q2.300 7.500.500 5.500z" fill="#f26a0a"/></svg>
<svg style="left:1093px;top:231px" width="11" height="11" viewBox="0 0 11 11"><path d="M.500 5.500l1.800-1.300q1 1.200 1.700 3.300Q6.500 3.500 10.800.800q-4 4.500-6.300 10h-1.300Q2.300 7.500.500 5.500z" fill="#f26a0a"/></svg>
<div class="sb" style="left:1327px;top:228px;width:17px;height:150px;"></div>
<svg style="left:1331px;top:234px" width="9" height="6" viewBox="0 0 9 6"><path d="M1 5l3.500-3.500L8 5" fill="none" stroke="#c9c9c9" stroke-width="1.200"/></svg>
<svg style="left:1331px;top:366px" width="9" height="6" viewBox="0 0 9 6"><path d="M1 1l3.500 3.500L8 1" fill="none" stroke="#c9c9c9" stroke-width="1.200"/></svg>
<div style="left:1326px;top:379px;width:1px;height:50px;background:#d4d4d4"></div>
<div style="left:919px;top:381px;width:35px;height:22px;background:linear-gradient(#64a2ea,#3f7fd2);border-radius:4px 0 0 4px"></div>
<div class="t c b w" style="left:919px;top:381px;width:35px;height:22px;line-height:22px;font-family:'Liberation Mono',monospace;font-size:12px;letter-spacing:-.6px">ALL</div>
<div style="left:954px;top:381px;width:24px;height:22px;background:linear-gradient(#ffffff,#e9e9e9);border:1px solid #c8c8c8;border-left:none"></div>
<div class="t c" style="left:954px;top:381px;width:23px;height:22px;line-height:22px;color:#8d8d8d;font-size:11.5px">O</div>
<div style="left:978px;top:381px;width:22px;height:22px;background:linear-gradient(#ffffff,#e9e9e9);border:1px solid #c8c8c8;border-left:none;border-radius:0 4px 4px 0"></div>
<div class="t c" style="left:978px;top:381px;width:21px;height:22px;line-height:22px;color:#8d8d8d;font-size:11.5px">I</div>
<div class="sel" style="left:1003px;top:381px;width:148px;height:22px;line-height:20px;padding-left:5px;letter-spacing:.7px;word-spacing:1px">- 진료과 -</div>
<svg style="left:1133px;top:389.0px" width="11" height="7" viewBox="0 0 11 7"><path d="M1 1l4.500 4.500L10 1" fill="none" stroke="#333" stroke-width="1.500"/></svg>
<div style="left:1153px;top:381px;width:143px;height:21px;background:linear-gradient(#fac168,#f0a838 45%,#e8961c);border-radius:2px"></div>
<div class="t c b" style="left:1153px;top:381px;width:26px;height:21px;line-height:21px;color:#fff3d6;font-family:'Liberation Mono',monospace;font-size:12px;letter-spacing:0.8px">PI</div>
<div style="left:1178px;top:381px;width:1px;height:21px;background:#d99536"></div>
<div class="t c b" style="left:1179px;top:381px;width:25px;height:21px;line-height:21px;color:#fff3d6;font-family:'Liberation Mono',monospace;font-size:12px;letter-spacing:0.8px">Dx</div>
<div style="left:1203px;top:381px;width:1px;height:21px;background:#d99536"></div>
<div class="t c b" style="left:1204px;top:381px;width:25px;height:21px;line-height:21px;color:#fff3d6;font-family:'Liberation Mono',monospace;font-size:12px;letter-spacing:0.8px">Rx</div>
<div style="left:1228px;top:381px;width:1px;height:21px;background:#d99536"></div>
<div class="t c b" style="left:1229px;top:381px;width:29px;height:21px;line-height:21px;color:#fff3d6;font-family:'Liberation Mono',monospace;font-size:12px;letter-spacing:0.3px">Pic</div>
<div style="left:1257px;top:381px;width:1px;height:21px;background:#d99536"></div>
<div class="t c b" style="left:1258px;top:381px;width:38px;height:21px;line-height:21px;color:#fff3d6;font-family:'Liberation Mono',monospace;font-size:12px;letter-spacing:0.3px">EMR</div>
<div style="left:1299px;top:380px;width:24px;height:23px;background:linear-gradient(#868686,#636363);border-radius:3px"></div>
<svg style="left:1303px;top:383px" width="17" height="17" viewBox="0 0 17 17"><circle cx="10.500" cy="6.500" r="4.300" fill="none" stroke="#fff" stroke-width="2.400"/><path d="M7.300 9.700l-5 5" stroke="#fff" stroke-width="2.800" stroke-linecap="round"/></svg>
<svg style="left:1327px;top:386px" width="16" height="16" viewBox="0 0 16 16"><circle cx="8" cy="8" r="6" fill="#f4f4f4" stroke="#4a4a4a" stroke-width="1"/><path d="M5 9.300l3-3 3 3" fill="none" stroke="#4a4a4a" stroke-width="1.100"/></svg>
<div class="sel" style="left:919px;top:406px;width:81px;height:22px;line-height:20px;padding-left:5px;letter-spacing:.7px;word-spacing:1px">3개월</div>
<svg style="left:982px;top:414.0px" width="11" height="7" viewBox="0 0 11 7"><path d="M1 1l4.500 4.500L10 1" fill="none" stroke="#333" stroke-width="1.500"/></svg>
<div class="sel" style="left:1003px;top:406px;width:320px;height:22px;line-height:20px;padding-left:5px;letter-spacing:.7px;word-spacing:1px">- 항목유형 -</div>
<svg style="left:1305px;top:414.0px" width="11" height="7" viewBox="0 0 11 7"><path d="M1 1l4.500 4.500L10 1" fill="none" stroke="#333" stroke-width="1.500"/></svg>
<div style="left:916px;top:429px;width:428px;height:389px;background:#fff"></div>
<div class="gh" style="left:916px;top:429px;width:61px;height:23px;"></div>
<div class="t c k" style="left:916px;top:429px;width:61px;height:22px;line-height:22px;">코드</div>
<div class="gh" style="left:977px;top:429px;width:205px;height:23px;"></div>
<div class="t c k" style="left:977px;top:429px;width:205px;height:22px;line-height:22px;">내용</div>
<div class="gh" style="left:1182px;top:429px;width:35px;height:23px;"></div>
<div class="t c k" style="left:1182px;top:429px;width:35px;height:22px;line-height:22px;">수량</div>
<div class="gh" style="left:1217px;top:429px;width:35px;height:23px;"></div>
<div class="t c k" style="left:1217px;top:429px;width:35px;height:22px;line-height:22px;">횟수</div>
<div class="gh" style="left:1252px;top:429px;width:35px;height:23px;"></div>
<div class="t c k" style="left:1252px;top:429px;width:35px;height:22px;line-height:22px;">일수</div>
<div class="gh" style="left:1287px;top:429px;width:20px;height:23px;"></div>
<div class="t c" style="left:1287px;top:429px;width:20px;height:22px;line-height:22px;">C</div>
<div class="gh" style="left:1307px;top:429px;width:20px;height:23px;"></div>
<div class="t c" style="left:1307px;top:429px;width:20px;height:22px;line-height:22px;">W</div>
<div class="sb" style="left:1327px;top:452px;width:17px;height:366px;"></div>
<svg style="left:1331px;top:458px" width="9" height="6" viewBox="0 0 9 6"><path d="M1 5l3.500-3.500L8 5" fill="none" stroke="#c9c9c9" stroke-width="1.200"/></svg>
<svg style="left:1331px;top:806px" width="9" height="6" viewBox="0 0 9 6"><path d="M1 1l3.500 3.500L8 1" fill="none" stroke="#c9c9c9" stroke-width="1.200"/></svg>
<div class="t" style="left:921px;top:451.5px;width:56px;height:19px;line-height:19px;font-family:'Liberation Mono','NanumGothicCoding',monospace;font-size:11.5px;letter-spacing:-.9px">Diag</div>
<div class="t k" style="left:980.5px;top:451.5px;width:200px;height:19px;line-height:19px;">입퇴원확인서</div>
<div style="left:916px;top:471px;width:411px;height:19px;background:#7b7b7b"></div>
<div class="t w" style="left:981px;top:471px;width:200px;height:19px;line-height:19px;"><span style="font-family:'Liberation Mono',monospace;font-size:11.5px;letter-spacing:-.9px">2023-04-25 [Dr.</span><span class="k">배우미</span><span style="font-family:'Liberation Mono',monospace;font-size:11.5px;letter-spacing:-.9px">]&nbsp;</span><span style="background:#c24fa9;padding:1px 0"><span style="font-family:'Liberation Mono',monospace;font-size:11.5px;letter-spacing:-.9px">[</span><span class="k">초진</span><span style="font-family:'Liberation Mono',monospace;font-size:11.5px;letter-spacing:-.9px">]</span></span></div>
<div style="left:1314px;top:475px;width:11px;height:11px;background:#fff;border:1px solid #3c50c8;border-radius:2px"></div>
<div style="left:1316px;top:479px;width:7px;height:3px;background:#2a3fc0"></div>
<div class="t" style="left:921px;top:489.5px;width:56px;height:19px;line-height:19px;font-family:'Liberation Mono','NanumGothicCoding',monospace;font-size:11.5px;letter-spacing:-.9px;color:#20a040">H25.90</div>
<div class="t k" style="left:980.5px;top:489.5px;width:200px;height:19px;line-height:19px;color:#20a040;word-spacing:1px">상세불명의 노년백내장, 오른쪽</div>
<div class="t" style="left:921px;top:509.5px;width:56px;height:19px;line-height:19px;font-family:'Liberation Mono','NanumGothicCoding',monospace;font-size:11.5px;letter-spacing:-.9px">S5111</div>
<div class="t k" style="left:980.5px;top:509.5px;width:201px;height:19px;line-height:19px;">백내장및수정체수술-수정체낭외또는낭</div>
<div class="t c" style="left:1203.5px;top:509.5px;width:10px;height:19px;line-height:19px;">1</div>
<div class="t c" style="left:1238.5px;top:509.5px;width:10px;height:19px;line-height:19px;">1</div>
<div class="t c" style="left:1273.5px;top:509.5px;width:10px;height:19px;line-height:19px;">1</div>
<div style="left:915px;top:823px;width:430px;height:27px;background:#f4f4f4;border:1px solid #ababab"></div>
<div style="left:919px;top:832px;width:8px;height:9px;background:#e9524a;border-radius:2px"></div>
<svg style="left:921px;top:834px" width="4" height="5" viewBox="0 0 4 5"><path d="M.5 0l3 2.500-3 2.500z" fill="#fff"/></svg>
<div class="t b" style="left:932px;top:827.5px;width:80px;height:19px;line-height:19px;color:#3f9a1e;font-size:12.5px;letter-spacing:1.300px">임신주수 :</div>
<svg style="left:1325.5px;top:828.5px" width="16" height="16" viewBox="0 0 16 16"><circle cx="8" cy="8" r="6" fill="#f4f4f4" stroke="#4a4a4a" stroke-width="1"/><path d="M5 9.300l3-3 3 3" fill="none" stroke="#4a4a4a" stroke-width="1.100"/></svg>
</div></div>
</div></div>
</body></html>
